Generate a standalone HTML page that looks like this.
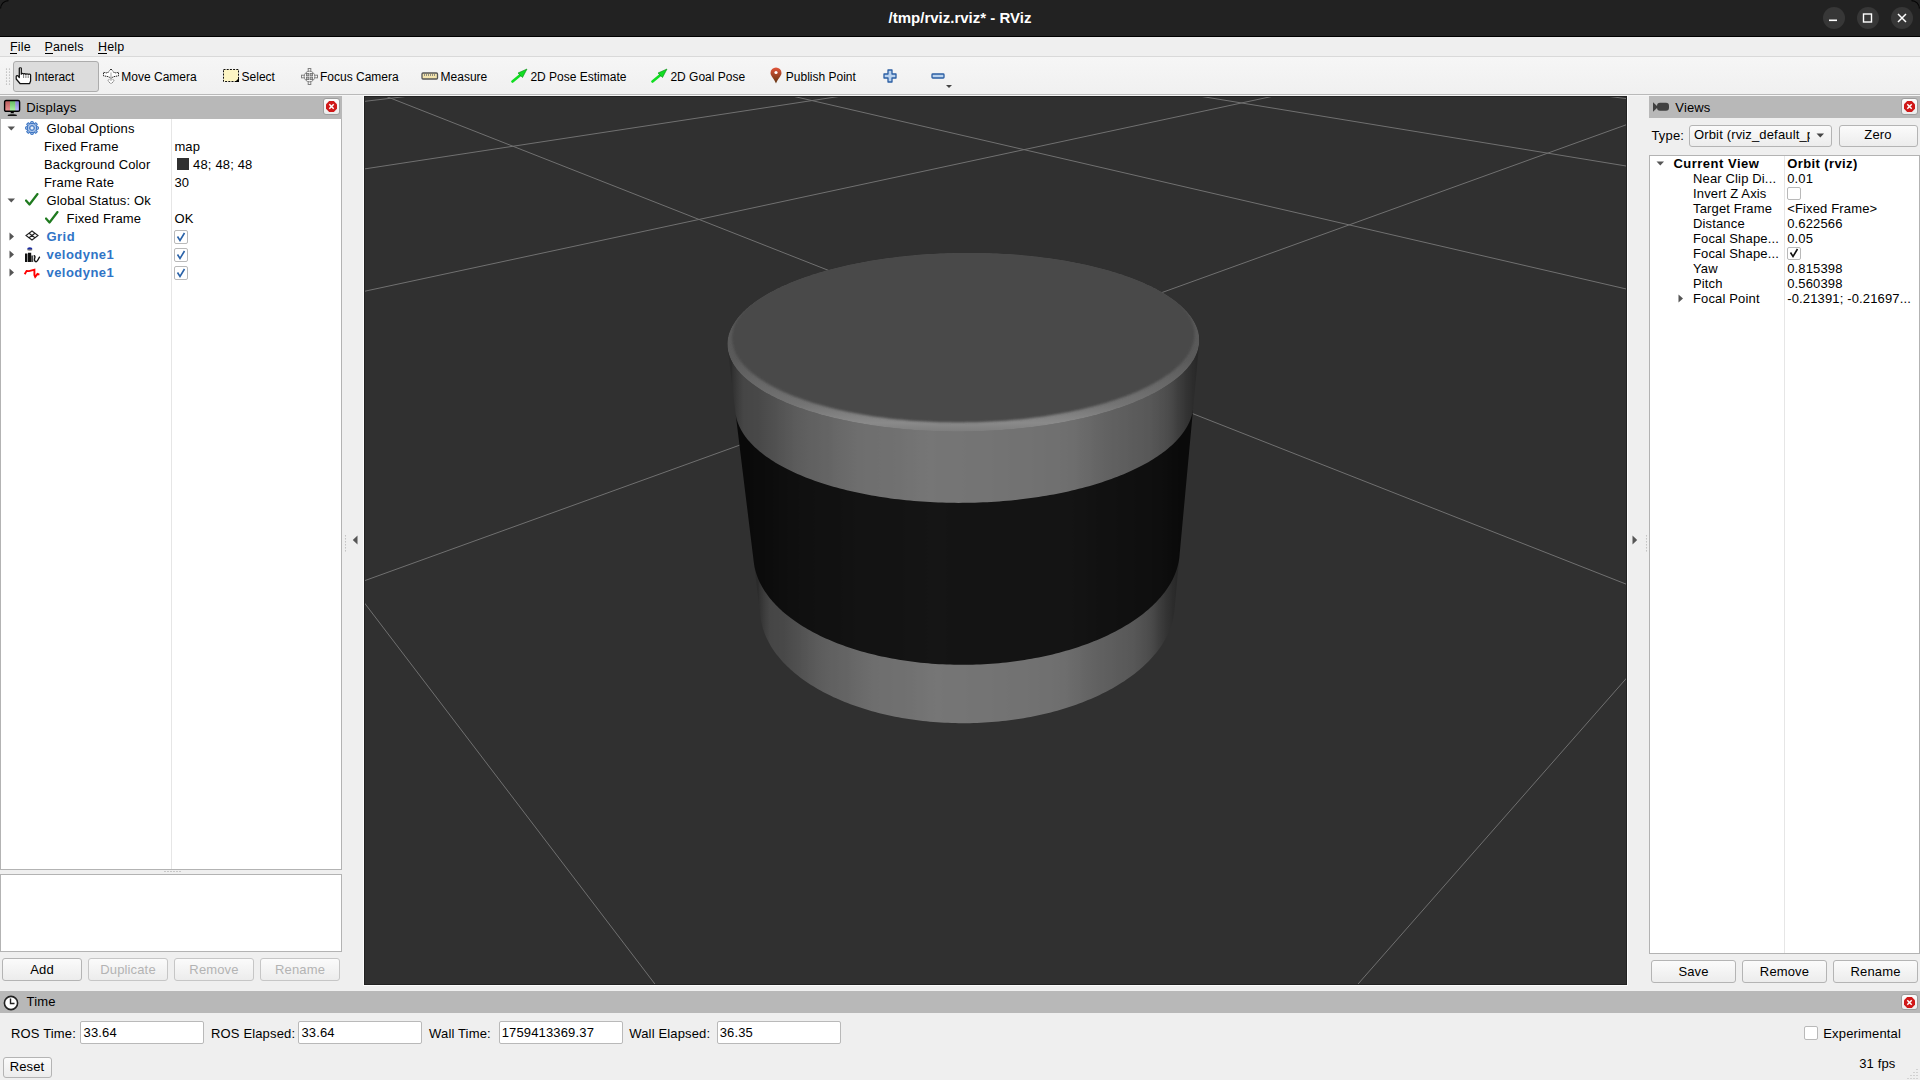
<!DOCTYPE html>
<html><head><meta charset="utf-8"><title>RViz</title>
<style>
html,body{margin:0;padding:0;width:1920px;height:1080px;overflow:hidden;background:#efefef;}
body{position:relative;font-family:"Liberation Sans", sans-serif;}
.t{position:absolute;white-space:nowrap;line-height:14px;font-family:"Liberation Sans", sans-serif;}
.btn{position:absolute;box-sizing:border-box;border:1px solid #b4b4b4;border-radius:3px;background:linear-gradient(#fbfbfb,#ececec);}
.inp{position:absolute;box-sizing:border-box;border:1px solid #b9b9b9;border-radius:2px;background:#fff;}
.cb{position:absolute;box-sizing:border-box;border:1px solid #b9b9b9;border-radius:2px;background:#fff;}
.dt{position:absolute;background:#b8b8b8;}
.close{position:absolute;box-sizing:border-box;width:17px;height:17px;border:1px solid #9e9e9e;border-radius:3px;background:linear-gradient(#fdfdfd,#ececec);}
</style></head><body>

<div style="position:absolute;left:0px;top:0px;width:1920px;height:36px;background:#222222;"></div>
<div style="position:absolute;left:0px;top:36px;width:1920px;height:1px;background:#000;"></div>
<svg style="position:absolute;left:0px;top:0px;" width="12" height="12" viewBox="0 0 12 12"><path d="M0.6 8.5 A8 8 0 0 1 8.5 0.6" fill="none" stroke="#050505" stroke-width="1.1"/></svg>
<svg style="position:absolute;left:1908px;top:0px;" width="12" height="12" viewBox="0 0 12 12"><path d="M3.5 0.6 A8 8 0 0 1 11.4 8.5" fill="none" stroke="#050505" stroke-width="1.1"/></svg>
<div class="t" style="left:0;width:1920px;text-align:center;top:9px;line-height:18px;font-size:15px;font-weight:bold;color:#ffffff;letter-spacing:0px;padding-left:0px">/tmp/rviz.rviz* - RViz</div>
<div style="position:absolute;left:1823px;top:7px;width:22px;height:22px;background:#373737;border-radius:50%;"></div>
<div style="position:absolute;left:1857px;top:7px;width:22px;height:22px;background:#373737;border-radius:50%;"></div>
<div style="position:absolute;left:1891px;top:7px;width:22px;height:22px;background:#373737;border-radius:50%;"></div>
<svg style="position:absolute;left:1823px;top:7px;" width="90" height="22" viewBox="0 0 90 22">
<rect x="6" y="12.5" width="8" height="1.6" fill="#fff"/>
<rect x="40.5" y="7" width="8" height="8" fill="none" stroke="#fff" stroke-width="1.4"/>
<path d="M75 7 L83 15 M83 7 L75 15" stroke="#fff" stroke-width="1.5"/>
</svg>
<div style="position:absolute;left:0px;top:37px;width:1920px;height:20px;background:#efefef;"></div>
<div style="position:absolute;left:0px;top:56px;width:1920px;height:1px;background:#d9d9d9;"></div>
<div class="t" style="left:10px;top:39.97px;font-size:12.5px;color:#000;font-weight:normal;letter-spacing:0.15px;">File</div>
<div style="position:absolute;left:10px;top:53px;width:7px;height:1px;background:#000;"></div>
<div class="t" style="left:44.5px;top:39.97px;font-size:12.5px;color:#000;font-weight:normal;letter-spacing:0.15px;">Panels</div>
<div style="position:absolute;left:44.5px;top:53px;width:8px;height:1px;background:#000;"></div>
<div class="t" style="left:98px;top:39.97px;font-size:12.5px;color:#000;font-weight:normal;letter-spacing:0.15px;">Help</div>
<div style="position:absolute;left:98px;top:53px;width:9px;height:1px;background:#000;"></div>
<div style="position:absolute;left:0px;top:57px;width:1920px;height:37px;background:linear-gradient(#f6f6f6,#f0f0f0);"></div>
<div style="position:absolute;left:0px;top:94px;width:1920px;height:1px;background:#b9b9b9;"></div>
<div style="position:absolute;left:0px;top:95px;width:1920px;height:1px;background:#f6f6f6;"></div>
<svg style="position:absolute;left:5px;top:67px;" width="6" height="18" viewBox="0 0 6 18"><circle cx="1.5" cy="2" r="0.6" fill="#9a9a9a"/><circle cx="1.5" cy="5" r="0.6" fill="#9a9a9a"/><circle cx="1.5" cy="8" r="0.6" fill="#9a9a9a"/><circle cx="1.5" cy="11" r="0.6" fill="#9a9a9a"/><circle cx="1.5" cy="14" r="0.6" fill="#9a9a9a"/><circle cx="1.5" cy="17" r="0.6" fill="#9a9a9a"/><circle cx="4.5" cy="2" r="0.6" fill="#9a9a9a"/><circle cx="4.5" cy="5" r="0.6" fill="#9a9a9a"/><circle cx="4.5" cy="8" r="0.6" fill="#9a9a9a"/><circle cx="4.5" cy="11" r="0.6" fill="#9a9a9a"/><circle cx="4.5" cy="14" r="0.6" fill="#9a9a9a"/><circle cx="4.5" cy="17" r="0.6" fill="#9a9a9a"/></svg>
<div style="position:absolute;left:13px;top:61px;width:86px;height:31px;box-sizing:border-box;background:#dcdcdc;border:1px solid #acacac;border-radius:3px;"></div>
<svg style="position:absolute;left:15px;top:67px;" width="18" height="18" viewBox="0 0 18 18"><path d="M4.3 1.2 C4.3 0.6 6.3 0.6 6.3 1.2 V7.2 C6.3 6 8.6 6 8.6 7.2 C8.6 6.3 10.9 6.3 10.9 7.4 C10.9 6.6 13.2 6.6 13.2 7.6 C13.2 7 15.6 7 15.6 8 V14 L14.6 16.5 H5 L1.2 12 V9.5 C1.2 8.6 2.6 8.4 3.2 9.2 L4.3 10.5 Z" fill="#fff" stroke="#111" stroke-width="1.25" stroke-linejoin="round"/>
<path d="M8.6 8 V11 M10.9 8.2 V11 M13.2 8.4 V11" stroke="#555" stroke-width="0.8"/></svg>
<div class="t" style="left:34.4px;top:69.54px;font-size:12px;color:#000;font-weight:normal;letter-spacing:0px;">Interact</div>
<svg style="position:absolute;left:102px;top:67px;" width="18" height="18" viewBox="0 0 18 18"><g fill="#fff" stroke="#222" stroke-width="1" stroke-dasharray="1.3 0.7">
<path d="M9 2 L12.5 6 L16.5 5.4 V8.8 L12 9.6 L9 11 L6 9.6 L1.5 8.8 V5.4 L5.5 6 Z"/></g>
<path d="M9 11.5 L12.3 13.5 L9 17 L5.7 13.5 Z" fill="#fff" stroke="#777" stroke-width="1" stroke-dasharray="1.3 0.7"/>
<path d="M9 5.5 V14" stroke="#bbb" stroke-width="1.3"/></svg>
<div class="t" style="left:121.3px;top:69.54px;font-size:12px;color:#000;font-weight:normal;letter-spacing:0px;">Move Camera</div>
<svg style="position:absolute;left:223px;top:69px;" width="16" height="13" viewBox="0 0 16 13"><rect x="0.5" y="0.5" width="15" height="12" fill="#fdf5c4" stroke="#111" stroke-width="1" stroke-dasharray="2 1.2"/>
<path d="M16 9 V13 H12 Z" fill="#000"/></svg>
<div class="t" style="left:241.6px;top:69.54px;font-size:12px;color:#000;font-weight:normal;letter-spacing:0px;">Select</div>
<svg style="position:absolute;left:300px;top:67px;" width="19" height="19" viewBox="0 0 19 19"><g fill="#f6f6f6" stroke="#808080" stroke-width="1">
<rect x="8.2" y="1.5" width="2.6" height="16"/><rect x="1.5" y="8.2" width="16" height="2.6"/>
<circle cx="9.5" cy="9.5" r="5.3"/></g>
<g fill="#bdbdbd" stroke="#6e6e6e" stroke-width="0.8"><rect x="6.4" y="6.4" width="2.4" height="2.4"/><rect x="10.2" y="6.4" width="2.4" height="2.4"/><rect x="6.4" y="10.2" width="2.4" height="2.4"/><rect x="10.2" y="10.2" width="2.4" height="2.4"/></g></svg>
<div class="t" style="left:320px;top:69.54px;font-size:12px;color:#000;font-weight:normal;letter-spacing:0px;">Focus Camera</div>
<svg style="position:absolute;left:421px;top:72px;" width="18" height="8" viewBox="0 0 18 8"><rect x="1" y="1" width="15.5" height="6" rx="1" fill="#f3e4ad" stroke="#555" stroke-width="1.3"/>
<path d="M3.5 2 v2 M5.5 2 v2 M7.5 2 v2 M9.5 2 v2 M11.5 2 v2 M13.5 2 v2" stroke="#777" stroke-width="0.8"/></svg>
<div class="t" style="left:440.6px;top:69.54px;font-size:12px;color:#000;font-weight:normal;letter-spacing:0px;">Measure</div>
<svg style="position:absolute;left:511px;top:68px;" width="17" height="15" viewBox="0 0 17 15"><path d="M1.5 13.5 L10 6.5" stroke="#11dd22" stroke-width="2.6" stroke-linecap="round"/>
<path d="M16 1 L7 5 L11.5 9.5 Z" fill="#11dd22" stroke="#0a8a14" stroke-width="0.6"/></svg>
<div class="t" style="left:530.4px;top:69.54px;font-size:12px;color:#000;font-weight:normal;letter-spacing:0px;">2D Pose Estimate</div>
<svg style="position:absolute;left:651px;top:68px;" width="17" height="15" viewBox="0 0 17 15"><path d="M1.5 13.5 L10 6.5" stroke="#11dd22" stroke-width="2.6" stroke-linecap="round"/>
<path d="M16 1 L7 5 L11.5 9.5 Z" fill="#11dd22" stroke="#0a8a14" stroke-width="0.6"/></svg>
<div class="t" style="left:670.4px;top:69.54px;font-size:12px;color:#000;font-weight:normal;letter-spacing:0px;">2D Goal Pose</div>
<svg style="position:absolute;left:769px;top:67px;" width="14" height="17" viewBox="0 0 14 17"><defs><linearGradient id="pg" x1="0" y1="0" x2="0" y2="1"><stop offset="0" stop-color="#e3553a"/><stop offset="1" stop-color="#5e3410"/></linearGradient></defs>
<path d="M7 16.5 C5.5 12 1.5 9 1.5 6 A5.5 5.5 0 0 1 12.5 6 C12.5 9 8.5 12 7 16.5 Z" fill="url(#pg)"/>
<circle cx="7" cy="5.5" r="1.6" fill="#fff"/></svg>
<div class="t" style="left:785.8px;top:69.54px;font-size:12px;color:#000;font-weight:normal;letter-spacing:0px;">Publish Point</div>
<svg style="position:absolute;left:883px;top:69px;" width="14" height="14" viewBox="0 0 14 14"><path d="M5 1 H9 V5 H13 V9 H9 V13 H5 V9 H1 V5 H5 Z" fill="#b9d2ee" stroke="#2a5da3" stroke-width="1.3" stroke-linejoin="round"/></svg>
<svg style="position:absolute;left:931px;top:73px;" width="14" height="6" viewBox="0 0 14 6"><rect x="1" y="1" width="12" height="4" rx="0.8" fill="#b9d2ee" stroke="#2a5da3" stroke-width="1.3"/></svg>
<svg style="position:absolute;left:945px;top:84px;" width="8" height="5" viewBox="0 0 8 5"><path d="M1 1 H7 L4 4 Z" fill="#444"/></svg>
<div style="position:absolute;left:0px;top:96px;width:342px;height:23px;background:#b8b8b8;"></div>
<svg style="position:absolute;left:3px;top:99px;" width="19" height="19" viewBox="0 0 19 19"><defs>
<linearGradient id="mr" x1="0" y1="0" x2="0" y2="1"><stop offset="0" stop-color="#b85c5c"/><stop offset="1" stop-color="#ee9494"/></linearGradient>
<linearGradient id="mgr" x1="0" y1="0" x2="0" y2="1"><stop offset="0" stop-color="#62b862"/><stop offset="1" stop-color="#b0f6a6"/></linearGradient>
<linearGradient id="mb" x1="0" y1="0" x2="0" y2="1"><stop offset="0" stop-color="#8480d0"/><stop offset="1" stop-color="#bcbcff"/></linearGradient></defs>
<rect x="1.8" y="1.6" width="5.2" height="10.4" fill="url(#mr)"/><rect x="7" y="1.6" width="5.4" height="10.4" fill="url(#mgr)"/><rect x="12.4" y="1.6" width="4" height="10.4" fill="url(#mb)"/>
<rect x="1.6" y="1.5" width="15" height="10.8" rx="1.4" fill="none" stroke="#000" stroke-width="1.4"/>
<path d="M8 12.5 H10.5 L11 14.3 H7.5 Z" fill="#000"/>
<path d="M4.6 16.2 C5 15 13.6 15 14 16.2 L13.6 17 H5 Z" fill="#111"/></svg>
<div class="t" style="left:26.3px;top:101.00px;font-size:13px;color:#000;font-weight:normal;letter-spacing:0.15px;">Displays</div>
<div class="close" style="left:323px;top:98px;"></div>
<svg style="position:absolute;left:325px;top:100px;" width="13" height="13" viewBox="0 0 13 13"><path d="M4.2 1 H8.8 L12 4.2 V8.8 L8.8 12 H4.2 L1 8.8 V4.2 Z" fill="#d01818"/>
<path d="M4.3 4.3 L8.7 8.7 M8.7 4.3 L4.3 8.7" stroke="#fff" stroke-width="1.5"/></svg>
<div style="position:absolute;left:0px;top:119px;width:342px;height:751px;box-sizing:border-box;background:#fff;border:1px solid #b3b3b3;border-top:none;"></div>
<div style="position:absolute;left:171px;top:119px;width:1px;height:750px;background:#e6e6e6;"></div>
<svg style="position:absolute;left:7px;top:126px;" width="9" height="5" viewBox="0 0 9 5"><path d="M0.5 0.5 H8 L4.25 4.5 Z" fill="#555"/></svg>
<svg style="position:absolute;left:24.5px;top:120.5px;" width="14" height="14" viewBox="0 0 14 14"><g transform="translate(7 7)" fill="#a9c3e8" stroke="#3b74c2" stroke-width="1"><rect x="-1.3" y="-6.4" width="2.6" height="3" rx="0.4" transform="rotate(0)"/><rect x="-1.3" y="-6.4" width="2.6" height="3" rx="0.4" transform="rotate(45)"/><rect x="-1.3" y="-6.4" width="2.6" height="3" rx="0.4" transform="rotate(90)"/><rect x="-1.3" y="-6.4" width="2.6" height="3" rx="0.4" transform="rotate(135)"/><rect x="-1.3" y="-6.4" width="2.6" height="3" rx="0.4" transform="rotate(180)"/><rect x="-1.3" y="-6.4" width="2.6" height="3" rx="0.4" transform="rotate(225)"/><rect x="-1.3" y="-6.4" width="2.6" height="3" rx="0.4" transform="rotate(270)"/><rect x="-1.3" y="-6.4" width="2.6" height="3" rx="0.4" transform="rotate(315)"/><circle r="4.6"/></g>
<g transform="translate(7 7)"><circle r="4.1" fill="#a9c3e8"/><circle r="2.4" fill="none" stroke="#3b74c2" stroke-width="1"/><circle r="1" fill="#fff"/></g></svg>
<div class="t" style="left:46.5px;top:122.00px;font-size:13px;color:#000;font-weight:normal;letter-spacing:0.15px;">Global Options</div>
<div class="t" style="left:44px;top:140.00px;font-size:13px;color:#000;font-weight:normal;letter-spacing:0.15px;">Fixed Frame</div>
<div class="t" style="left:174.4px;top:140.00px;font-size:13px;color:#000;font-weight:normal;letter-spacing:0.15px;">map</div>
<div class="t" style="left:44px;top:158.00px;font-size:13px;color:#000;font-weight:normal;letter-spacing:0.15px;">Background Color</div>
<div style="position:absolute;left:177px;top:158px;width:12px;height:12px;background:#303030;border:0px;"></div>
<div class="t" style="left:193.1px;top:158.00px;font-size:13px;color:#000;font-weight:normal;letter-spacing:0.15px;">48; 48; 48</div>
<div class="t" style="left:44px;top:176.00px;font-size:13px;color:#000;font-weight:normal;letter-spacing:0.15px;">Frame Rate</div>
<div class="t" style="left:174.4px;top:176.00px;font-size:13px;color:#000;font-weight:normal;letter-spacing:0.15px;">30</div>
<svg style="position:absolute;left:7px;top:198px;" width="9" height="5" viewBox="0 0 9 5"><path d="M0.5 0.5 H8 L4.25 4.5 Z" fill="#555"/></svg>
<svg style="position:absolute;left:25px;top:193px;" width="14" height="13" viewBox="0 0 14 13"><path d="M1 7.5 L4.5 11.5 L12.5 1" fill="none" stroke="#1f7a1f" stroke-width="2.2" stroke-linecap="round" stroke-linejoin="round"/></svg>
<div class="t" style="left:46.5px;top:194.00px;font-size:13px;color:#000;font-weight:normal;letter-spacing:0.15px;">Global Status: Ok</div>
<svg style="position:absolute;left:45px;top:211px;" width="14" height="13" viewBox="0 0 14 13"><path d="M1 7.5 L4.5 11.5 L12.5 1" fill="none" stroke="#1f7a1f" stroke-width="2.2" stroke-linecap="round" stroke-linejoin="round"/></svg>
<div class="t" style="left:66.6px;top:212.00px;font-size:13px;color:#000;font-weight:normal;letter-spacing:0.15px;">Fixed Frame</div>
<div class="t" style="left:174.4px;top:212.00px;font-size:13px;color:#000;font-weight:normal;letter-spacing:0.15px;">OK</div>
<svg style="position:absolute;left:8.5px;top:232.0px;" width="6" height="9" viewBox="0 0 6 9"><path d="M0.5 0.5 V8.5 L5 4.5 Z" fill="#555"/></svg>
<div class="t" style="left:46.5px;top:230.00px;font-size:13px;color:#2f74c6;font-weight:bold;letter-spacing:0.45px;">Grid</div>
<div class="cb" style="left:174px;top:229.5px;width:14px;height:14px;"></div>
<svg style="position:absolute;left:175px;top:230.5px;" width="12" height="12" viewBox="0 0 12 12"><path d="M2.5 5.5 L5 9.5 L9.5 2" fill="none" stroke="#2a62a8" stroke-width="1.6"/></svg>
<svg style="position:absolute;left:8.5px;top:250.0px;" width="6" height="9" viewBox="0 0 6 9"><path d="M0.5 0.5 V8.5 L5 4.5 Z" fill="#555"/></svg>
<div class="t" style="left:46.5px;top:248.00px;font-size:13px;color:#2f74c6;font-weight:bold;letter-spacing:0.45px;">velodyne1</div>
<div class="cb" style="left:174px;top:247.5px;width:14px;height:14px;"></div>
<svg style="position:absolute;left:175px;top:248.5px;" width="12" height="12" viewBox="0 0 12 12"><path d="M2.5 5.5 L5 9.5 L9.5 2" fill="none" stroke="#2a62a8" stroke-width="1.6"/></svg>
<svg style="position:absolute;left:8.5px;top:268.0px;" width="6" height="9" viewBox="0 0 6 9"><path d="M0.5 0.5 V8.5 L5 4.5 Z" fill="#555"/></svg>
<div class="t" style="left:46.5px;top:266.00px;font-size:13px;color:#2f74c6;font-weight:bold;letter-spacing:0.45px;">velodyne1</div>
<div class="cb" style="left:174px;top:265.5px;width:14px;height:14px;"></div>
<svg style="position:absolute;left:175px;top:266.5px;" width="12" height="12" viewBox="0 0 12 12"><path d="M2.5 5.5 L5 9.5 L9.5 2" fill="none" stroke="#2a62a8" stroke-width="1.6"/></svg>
<svg style="position:absolute;left:25px;top:230px;" width="14" height="11" viewBox="0 0 14 11"><path d="M7 1 L13 5.5 L7 10 L1 5.5 Z M4 3.2 L10 7.8 M10 3.2 L4 7.8" fill="none" stroke="#222" stroke-width="1.1"/></svg>
<svg style="position:absolute;left:24px;top:246px;" width="17" height="17" viewBox="0 0 17 17"><ellipse cx="5.8" cy="2.9" rx="2.6" ry="1.7" fill="#1a2aa0"/><rect x="3.4" y="3.6" width="4.8" height="0.8" fill="#c8b870"/>
<path d="M1 7.5 h2.4 v8.5 h-2.4 z M4 6.8 h3.2 v9.2 h-3.2 z" fill="#111"/><path d="M3.4 8 h0.6 v8 h-0.6z" fill="#888"/>
<path d="M7.2 9.5 h2 v6.5 h-2 z" fill="#444"/>
<path d="M9.8 9.8 C11 9.5 11.2 11 10.6 12.5 C10 14.5 11 16 12.5 15.6 C14 15.2 14.5 12 15.8 10.8" fill="none" stroke="#111" stroke-width="1.4"/></svg>
<svg style="position:absolute;left:23px;top:268px;" width="18" height="11" viewBox="0 0 18 11"><path d="M1.7 6.2 L3.6 2.9 L6 3.1 L9.8 2.1 L11.4 1.7 L11.4 7 L12.2 8.9 L14.5 5.9 L16.4 6.6" fill="none" stroke="#ff0000" stroke-width="1.9" stroke-linejoin="miter"/></svg>
<svg style="position:absolute;left:164px;top:870px;" width="17" height="3" viewBox="0 0 17 3"><circle cx="1" cy="1.5" r="0.6" fill="#999"/><circle cx="4" cy="1.5" r="0.6" fill="#999"/><circle cx="7" cy="1.5" r="0.6" fill="#999"/><circle cx="10" cy="1.5" r="0.6" fill="#999"/><circle cx="13" cy="1.5" r="0.6" fill="#999"/><circle cx="16" cy="1.5" r="0.6" fill="#999"/></svg>
<div style="position:absolute;left:0px;top:874px;width:342px;height:78px;box-sizing:border-box;background:#fff;border:1px solid #b3b3b3;"></div>
<div class="btn" style="left:2px;top:958px;width:80px;height:23px;"></div>
<div class="t" style="left:2.0px;width:80px;text-align:center;top:962.50px;font-size:13px;color:#000;font-weight:normal;letter-spacing:0.15px">Add</div>
<div class="btn" style="left:88px;top:958px;width:80px;height:23px;border-color:#c6c6c6;"></div>
<div class="t" style="left:88.0px;width:80px;text-align:center;top:962.50px;font-size:13px;color:#b3b3b3;font-weight:normal;letter-spacing:0.15px">Duplicate</div>
<div class="btn" style="left:174px;top:958px;width:80px;height:23px;border-color:#c6c6c6;"></div>
<div class="t" style="left:174.0px;width:80px;text-align:center;top:962.50px;font-size:13px;color:#b3b3b3;font-weight:normal;letter-spacing:0.15px">Remove</div>
<div class="btn" style="left:260px;top:958px;width:80px;height:23px;border-color:#c6c6c6;"></div>
<div class="t" style="left:260.0px;width:80px;text-align:center;top:962.50px;font-size:13px;color:#b3b3b3;font-weight:normal;letter-spacing:0.15px">Rename</div>
<svg style="position:absolute;left:352px;top:535px;" width="6" height="10" viewBox="0 0 6 10"><path d="M5.5 0.5 V9.5 L0.8 5 Z" fill="#555"/></svg>
<svg style="position:absolute;left:344px;top:535px;" width="3" height="17" viewBox="0 0 3 17"><circle cx="1.5" cy="0.8" r="0.6" fill="#aaa"/><circle cx="1.5" cy="3.8" r="0.6" fill="#aaa"/><circle cx="1.5" cy="6.8" r="0.6" fill="#aaa"/><circle cx="1.5" cy="9.8" r="0.6" fill="#aaa"/><circle cx="1.5" cy="12.8" r="0.6" fill="#aaa"/><circle cx="1.5" cy="15.8" r="0.6" fill="#aaa"/></svg>
<div style="position:absolute;left:363px;top:95px;width:1px;height:891px;background:#fcfcfc;"></div>
<div style="position:absolute;left:364px;top:96px;width:1263px;height:888px;background:#303030;overflow:hidden;">
<svg width="1263" height="889" viewBox="0 0 1263 889" style="position:absolute;left:0;top:0"><g stroke="#707070" stroke-width="1" fill="none"><line x1="45.83" y1="0.00" x2="-0.00" y2="5.43"/><line x1="477.97" y1="0.00" x2="0.00" y2="73.00"/><line x1="909.98" y1="0.00" x2="0.00" y2="195.39"/><line x1="1263.00" y1="28.49" x2="0.00" y2="484.90"/><line x1="1263.00" y1="581.63" x2="993.17" y2="889.00"/><line x1="1241.82" y1="0.00" x2="1263.00" y2="2.69"/><line x1="835.06" y1="0.00" x2="1263.00" y2="70.15"/><line x1="428.18" y1="0.00" x2="1263.00" y2="193.17"/><line x1="21.18" y1="0.00" x2="1263.00" y2="488.48"/><line x1="0.00" y1="506.35" x2="291.65" y2="889.00"/></g>
<defs>
<linearGradient id="sideg" gradientUnits="userSpaceOnUse" x1="367.51" y1="0" x2="832.27" y2="0"><stop offset="0.0000" stop-color="rgb(43,43,43)"/><stop offset="0.0004" stop-color="rgb(44,44,44)"/><stop offset="0.0010" stop-color="rgb(46,46,46)"/><stop offset="0.0017" stop-color="rgb(47,47,47)"/><stop offset="0.0025" stop-color="rgb(49,49,49)"/><stop offset="0.0034" stop-color="rgb(50,50,50)"/><stop offset="0.0045" stop-color="rgb(51,51,51)"/><stop offset="0.0057" stop-color="rgb(53,53,53)"/><stop offset="0.0070" stop-color="rgb(54,54,54)"/><stop offset="0.0085" stop-color="rgb(55,55,55)"/><stop offset="0.0100" stop-color="rgb(57,57,57)"/><stop offset="0.0117" stop-color="rgb(59,59,59)"/><stop offset="0.0136" stop-color="rgb(60,60,60)"/><stop offset="0.0155" stop-color="rgb(62,62,62)"/><stop offset="0.0176" stop-color="rgb(64,64,64)"/><stop offset="0.0198" stop-color="rgb(65,65,65)"/><stop offset="0.0222" stop-color="rgb(67,67,67)"/><stop offset="0.0247" stop-color="rgb(69,69,69)"/><stop offset="0.0273" stop-color="rgb(70,70,70)"/><stop offset="0.0300" stop-color="rgb(70,70,70)"/><stop offset="0.0329" stop-color="rgb(70,70,70)"/><stop offset="0.0359" stop-color="rgb(71,71,71)"/><stop offset="0.0390" stop-color="rgb(71,71,71)"/><stop offset="0.0423" stop-color="rgb(71,71,71)"/><stop offset="0.0457" stop-color="rgb(71,71,71)"/><stop offset="0.0492" stop-color="rgb(72,72,72)"/><stop offset="0.0529" stop-color="rgb(72,72,72)"/><stop offset="0.0567" stop-color="rgb(72,72,72)"/><stop offset="0.0606" stop-color="rgb(73,73,73)"/><stop offset="0.0646" stop-color="rgb(74,74,74)"/><stop offset="0.0688" stop-color="rgb(75,75,75)"/><stop offset="0.0731" stop-color="rgb(76,76,76)"/><stop offset="0.0776" stop-color="rgb(77,77,77)"/><stop offset="0.0821" stop-color="rgb(78,78,78)"/><stop offset="0.0868" stop-color="rgb(79,79,79)"/><stop offset="0.0917" stop-color="rgb(80,80,80)"/><stop offset="0.0966" stop-color="rgb(81,81,81)"/><stop offset="0.1017" stop-color="rgb(83,83,83)"/><stop offset="0.1069" stop-color="rgb(84,84,84)"/><stop offset="0.1122" stop-color="rgb(85,85,85)"/><stop offset="0.1176" stop-color="rgb(87,87,87)"/><stop offset="0.1232" stop-color="rgb(88,88,88)"/><stop offset="0.1289" stop-color="rgb(89,89,89)"/><stop offset="0.1347" stop-color="rgb(91,91,91)"/><stop offset="0.1406" stop-color="rgb(92,92,92)"/><stop offset="0.1466" stop-color="rgb(93,93,93)"/><stop offset="0.1528" stop-color="rgb(94,94,94)"/><stop offset="0.1590" stop-color="rgb(95,95,95)"/><stop offset="0.1654" stop-color="rgb(96,96,96)"/><stop offset="0.1719" stop-color="rgb(97,97,97)"/><stop offset="0.1785" stop-color="rgb(97,97,97)"/><stop offset="0.1852" stop-color="rgb(98,98,98)"/><stop offset="0.1920" stop-color="rgb(99,99,99)"/><stop offset="0.1989" stop-color="rgb(100,100,100)"/><stop offset="0.2059" stop-color="rgb(100,100,100)"/><stop offset="0.2130" stop-color="rgb(101,101,101)"/><stop offset="0.2202" stop-color="rgb(103,103,103)"/><stop offset="0.2275" stop-color="rgb(104,104,104)"/><stop offset="0.2349" stop-color="rgb(105,105,105)"/><stop offset="0.2424" stop-color="rgb(106,106,106)"/><stop offset="0.2499" stop-color="rgb(107,107,107)"/><stop offset="0.2576" stop-color="rgb(108,108,108)"/><stop offset="0.2653" stop-color="rgb(109,109,109)"/><stop offset="0.2732" stop-color="rgb(110,110,110)"/><stop offset="0.2811" stop-color="rgb(110,110,110)"/><stop offset="0.2890" stop-color="rgb(111,111,111)"/><stop offset="0.2971" stop-color="rgb(111,111,111)"/><stop offset="0.3052" stop-color="rgb(111,111,111)"/><stop offset="0.3134" stop-color="rgb(111,111,111)"/><stop offset="0.3216" stop-color="rgb(112,112,112)"/><stop offset="0.3300" stop-color="rgb(112,112,112)"/><stop offset="0.3383" stop-color="rgb(112,112,112)"/><stop offset="0.3468" stop-color="rgb(112,112,112)"/><stop offset="0.3553" stop-color="rgb(113,113,113)"/><stop offset="0.3638" stop-color="rgb(113,113,113)"/><stop offset="0.3724" stop-color="rgb(114,114,114)"/><stop offset="0.3810" stop-color="rgb(115,115,115)"/><stop offset="0.3897" stop-color="rgb(115,115,115)"/><stop offset="0.3984" stop-color="rgb(116,116,116)"/><stop offset="0.4072" stop-color="rgb(117,117,117)"/><stop offset="0.4159" stop-color="rgb(117,117,117)"/><stop offset="0.4248" stop-color="rgb(118,118,118)"/><stop offset="0.4336" stop-color="rgb(118,118,118)"/><stop offset="0.4425" stop-color="rgb(117,117,117)"/><stop offset="0.4514" stop-color="rgb(117,117,117)"/><stop offset="0.4603" stop-color="rgb(117,117,117)"/><stop offset="0.4692" stop-color="rgb(117,117,117)"/><stop offset="0.4781" stop-color="rgb(117,117,117)"/><stop offset="0.4870" stop-color="rgb(117,117,117)"/><stop offset="0.4960" stop-color="rgb(117,117,117)"/><stop offset="0.5049" stop-color="rgb(116,116,116)"/><stop offset="0.5138" stop-color="rgb(116,116,116)"/><stop offset="0.5228" stop-color="rgb(116,116,116)"/><stop offset="0.5317" stop-color="rgb(116,116,116)"/><stop offset="0.5406" stop-color="rgb(116,116,116)"/><stop offset="0.5495" stop-color="rgb(116,116,116)"/><stop offset="0.5584" stop-color="rgb(116,116,116)"/><stop offset="0.5672" stop-color="rgb(115,115,115)"/><stop offset="0.5761" stop-color="rgb(115,115,115)"/><stop offset="0.5849" stop-color="rgb(115,115,115)"/><stop offset="0.5936" stop-color="rgb(115,115,115)"/><stop offset="0.6024" stop-color="rgb(114,114,114)"/><stop offset="0.6111" stop-color="rgb(114,114,114)"/><stop offset="0.6197" stop-color="rgb(114,114,114)"/><stop offset="0.6283" stop-color="rgb(114,114,114)"/><stop offset="0.6369" stop-color="rgb(114,114,114)"/><stop offset="0.6454" stop-color="rgb(114,114,114)"/><stop offset="0.6539" stop-color="rgb(113,113,113)"/><stop offset="0.6623" stop-color="rgb(113,113,113)"/><stop offset="0.6707" stop-color="rgb(113,113,113)"/><stop offset="0.6790" stop-color="rgb(112,112,112)"/><stop offset="0.6872" stop-color="rgb(112,112,112)"/><stop offset="0.6954" stop-color="rgb(112,112,112)"/><stop offset="0.7035" stop-color="rgb(112,112,112)"/><stop offset="0.7115" stop-color="rgb(111,111,111)"/><stop offset="0.7194" stop-color="rgb(111,111,111)"/><stop offset="0.7273" stop-color="rgb(110,110,110)"/><stop offset="0.7351" stop-color="rgb(110,110,110)"/><stop offset="0.7428" stop-color="rgb(109,109,109)"/><stop offset="0.7504" stop-color="rgb(107,107,107)"/><stop offset="0.7580" stop-color="rgb(106,106,106)"/><stop offset="0.7654" stop-color="rgb(105,105,105)"/><stop offset="0.7728" stop-color="rgb(104,104,104)"/><stop offset="0.7800" stop-color="rgb(102,102,102)"/><stop offset="0.7872" stop-color="rgb(101,101,101)"/><stop offset="0.7943" stop-color="rgb(100,100,100)"/><stop offset="0.8013" stop-color="rgb(99,99,99)"/><stop offset="0.8081" stop-color="rgb(98,98,98)"/><stop offset="0.8149" stop-color="rgb(97,97,97)"/><stop offset="0.8216" stop-color="rgb(96,96,96)"/><stop offset="0.8281" stop-color="rgb(96,96,96)"/><stop offset="0.8346" stop-color="rgb(95,95,95)"/><stop offset="0.8409" stop-color="rgb(94,94,94)"/><stop offset="0.8472" stop-color="rgb(94,94,94)"/><stop offset="0.8533" stop-color="rgb(93,93,93)"/><stop offset="0.8593" stop-color="rgb(92,92,92)"/><stop offset="0.8652" stop-color="rgb(91,91,91)"/><stop offset="0.8709" stop-color="rgb(91,91,91)"/><stop offset="0.8766" stop-color="rgb(90,90,90)"/><stop offset="0.8821" stop-color="rgb(90,90,90)"/><stop offset="0.8875" stop-color="rgb(89,89,89)"/><stop offset="0.8928" stop-color="rgb(88,88,88)"/><stop offset="0.8980" stop-color="rgb(88,88,88)"/><stop offset="0.9030" stop-color="rgb(87,87,87)"/><stop offset="0.9080" stop-color="rgb(85,85,85)"/><stop offset="0.9128" stop-color="rgb(84,84,84)"/><stop offset="0.9174" stop-color="rgb(83,83,83)"/><stop offset="0.9220" stop-color="rgb(81,81,81)"/><stop offset="0.9264" stop-color="rgb(80,80,80)"/><stop offset="0.9307" stop-color="rgb(79,79,79)"/><stop offset="0.9349" stop-color="rgb(77,77,77)"/><stop offset="0.9389" stop-color="rgb(76,76,76)"/><stop offset="0.9428" stop-color="rgb(74,74,74)"/><stop offset="0.9466" stop-color="rgb(72,72,72)"/><stop offset="0.9502" stop-color="rgb(70,70,70)"/><stop offset="0.9538" stop-color="rgb(67,67,67)"/><stop offset="0.9571" stop-color="rgb(65,65,65)"/><stop offset="0.9604" stop-color="rgb(62,62,62)"/><stop offset="0.9635" stop-color="rgb(61,61,61)"/><stop offset="0.9665" stop-color="rgb(59,59,59)"/><stop offset="0.9694" stop-color="rgb(57,57,57)"/><stop offset="0.9722" stop-color="rgb(56,56,56)"/><stop offset="0.9748" stop-color="rgb(54,54,54)"/><stop offset="0.9772" stop-color="rgb(52,52,52)"/><stop offset="0.9796" stop-color="rgb(51,51,51)"/><stop offset="0.9818" stop-color="rgb(50,50,50)"/><stop offset="0.9839" stop-color="rgb(49,49,49)"/><stop offset="0.9859" stop-color="rgb(48,48,48)"/><stop offset="0.9877" stop-color="rgb(47,47,47)"/><stop offset="0.9894" stop-color="rgb(46,46,46)"/><stop offset="0.9910" stop-color="rgb(45,45,45)"/><stop offset="0.9925" stop-color="rgb(44,44,44)"/><stop offset="0.9938" stop-color="rgb(44,44,44)"/><stop offset="0.9950" stop-color="rgb(43,43,43)"/><stop offset="0.9961" stop-color="rgb(43,43,43)"/><stop offset="0.9971" stop-color="rgb(42,42,42)"/><stop offset="0.9979" stop-color="rgb(42,42,42)"/><stop offset="0.9986" stop-color="rgb(41,41,41)"/><stop offset="0.9992" stop-color="rgb(41,41,41)"/><stop offset="0.9997" stop-color="rgb(40,40,40)"/><stop offset="1.0000" stop-color="rgb(40,40,40)"/></linearGradient>
<linearGradient id="sideg2" gradientUnits="userSpaceOnUse" x1="394.17" y1="0" x2="812.16" y2="0"><stop offset="0.0000" stop-color="rgb(43,43,43)"/><stop offset="0.0006" stop-color="rgb(44,44,44)"/><stop offset="0.0013" stop-color="rgb(46,46,46)"/><stop offset="0.0021" stop-color="rgb(47,47,47)"/><stop offset="0.0031" stop-color="rgb(49,49,49)"/><stop offset="0.0041" stop-color="rgb(50,50,50)"/><stop offset="0.0053" stop-color="rgb(51,51,51)"/><stop offset="0.0067" stop-color="rgb(53,53,53)"/><stop offset="0.0081" stop-color="rgb(54,54,54)"/><stop offset="0.0097" stop-color="rgb(55,55,55)"/><stop offset="0.0114" stop-color="rgb(57,57,57)"/><stop offset="0.0132" stop-color="rgb(59,59,59)"/><stop offset="0.0152" stop-color="rgb(60,60,60)"/><stop offset="0.0173" stop-color="rgb(62,62,62)"/><stop offset="0.0195" stop-color="rgb(64,64,64)"/><stop offset="0.0219" stop-color="rgb(65,65,65)"/><stop offset="0.0243" stop-color="rgb(67,67,67)"/><stop offset="0.0269" stop-color="rgb(69,69,69)"/><stop offset="0.0297" stop-color="rgb(70,70,70)"/><stop offset="0.0325" stop-color="rgb(70,70,70)"/><stop offset="0.0355" stop-color="rgb(70,70,70)"/><stop offset="0.0386" stop-color="rgb(71,71,71)"/><stop offset="0.0419" stop-color="rgb(71,71,71)"/><stop offset="0.0452" stop-color="rgb(71,71,71)"/><stop offset="0.0487" stop-color="rgb(71,71,71)"/><stop offset="0.0524" stop-color="rgb(72,72,72)"/><stop offset="0.0561" stop-color="rgb(72,72,72)"/><stop offset="0.0600" stop-color="rgb(72,72,72)"/><stop offset="0.0640" stop-color="rgb(73,73,73)"/><stop offset="0.0682" stop-color="rgb(74,74,74)"/><stop offset="0.0724" stop-color="rgb(75,75,75)"/><stop offset="0.0768" stop-color="rgb(76,76,76)"/><stop offset="0.0813" stop-color="rgb(77,77,77)"/><stop offset="0.0860" stop-color="rgb(78,78,78)"/><stop offset="0.0907" stop-color="rgb(79,79,79)"/><stop offset="0.0956" stop-color="rgb(80,80,80)"/><stop offset="0.1006" stop-color="rgb(81,81,81)"/><stop offset="0.1057" stop-color="rgb(83,83,83)"/><stop offset="0.1110" stop-color="rgb(84,84,84)"/><stop offset="0.1163" stop-color="rgb(85,85,85)"/><stop offset="0.1218" stop-color="rgb(87,87,87)"/><stop offset="0.1274" stop-color="rgb(88,88,88)"/><stop offset="0.1331" stop-color="rgb(89,89,89)"/><stop offset="0.1389" stop-color="rgb(91,91,91)"/><stop offset="0.1449" stop-color="rgb(92,92,92)"/><stop offset="0.1509" stop-color="rgb(93,93,93)"/><stop offset="0.1571" stop-color="rgb(94,94,94)"/><stop offset="0.1633" stop-color="rgb(95,95,95)"/><stop offset="0.1697" stop-color="rgb(96,96,96)"/><stop offset="0.1762" stop-color="rgb(97,97,97)"/><stop offset="0.1828" stop-color="rgb(97,97,97)"/><stop offset="0.1895" stop-color="rgb(98,98,98)"/><stop offset="0.1962" stop-color="rgb(99,99,99)"/><stop offset="0.2031" stop-color="rgb(100,100,100)"/><stop offset="0.2101" stop-color="rgb(100,100,100)"/><stop offset="0.2172" stop-color="rgb(101,101,101)"/><stop offset="0.2243" stop-color="rgb(103,103,103)"/><stop offset="0.2316" stop-color="rgb(104,104,104)"/><stop offset="0.2389" stop-color="rgb(105,105,105)"/><stop offset="0.2464" stop-color="rgb(106,106,106)"/><stop offset="0.2539" stop-color="rgb(107,107,107)"/><stop offset="0.2615" stop-color="rgb(108,108,108)"/><stop offset="0.2692" stop-color="rgb(109,109,109)"/><stop offset="0.2769" stop-color="rgb(110,110,110)"/><stop offset="0.2847" stop-color="rgb(110,110,110)"/><stop offset="0.2926" stop-color="rgb(111,111,111)"/><stop offset="0.3006" stop-color="rgb(111,111,111)"/><stop offset="0.3086" stop-color="rgb(111,111,111)"/><stop offset="0.3167" stop-color="rgb(111,111,111)"/><stop offset="0.3249" stop-color="rgb(112,112,112)"/><stop offset="0.3331" stop-color="rgb(112,112,112)"/><stop offset="0.3414" stop-color="rgb(112,112,112)"/><stop offset="0.3497" stop-color="rgb(112,112,112)"/><stop offset="0.3581" stop-color="rgb(113,113,113)"/><stop offset="0.3666" stop-color="rgb(113,113,113)"/><stop offset="0.3750" stop-color="rgb(114,114,114)"/><stop offset="0.3835" stop-color="rgb(115,115,115)"/><stop offset="0.3921" stop-color="rgb(115,115,115)"/><stop offset="0.4007" stop-color="rgb(116,116,116)"/><stop offset="0.4093" stop-color="rgb(117,117,117)"/><stop offset="0.4180" stop-color="rgb(117,117,117)"/><stop offset="0.4267" stop-color="rgb(118,118,118)"/><stop offset="0.4354" stop-color="rgb(118,118,118)"/><stop offset="0.4441" stop-color="rgb(117,117,117)"/><stop offset="0.4529" stop-color="rgb(117,117,117)"/><stop offset="0.4617" stop-color="rgb(117,117,117)"/><stop offset="0.4704" stop-color="rgb(117,117,117)"/><stop offset="0.4792" stop-color="rgb(117,117,117)"/><stop offset="0.4880" stop-color="rgb(117,117,117)"/><stop offset="0.4968" stop-color="rgb(117,117,117)"/><stop offset="0.5056" stop-color="rgb(116,116,116)"/><stop offset="0.5144" stop-color="rgb(116,116,116)"/><stop offset="0.5232" stop-color="rgb(116,116,116)"/><stop offset="0.5320" stop-color="rgb(116,116,116)"/><stop offset="0.5408" stop-color="rgb(116,116,116)"/><stop offset="0.5496" stop-color="rgb(116,116,116)"/><stop offset="0.5583" stop-color="rgb(116,116,116)"/><stop offset="0.5670" stop-color="rgb(115,115,115)"/><stop offset="0.5757" stop-color="rgb(115,115,115)"/><stop offset="0.5844" stop-color="rgb(115,115,115)"/><stop offset="0.5930" stop-color="rgb(115,115,115)"/><stop offset="0.6017" stop-color="rgb(114,114,114)"/><stop offset="0.6102" stop-color="rgb(114,114,114)"/><stop offset="0.6188" stop-color="rgb(114,114,114)"/><stop offset="0.6273" stop-color="rgb(114,114,114)"/><stop offset="0.6357" stop-color="rgb(114,114,114)"/><stop offset="0.6441" stop-color="rgb(114,114,114)"/><stop offset="0.6525" stop-color="rgb(113,113,113)"/><stop offset="0.6608" stop-color="rgb(113,113,113)"/><stop offset="0.6690" stop-color="rgb(113,113,113)"/><stop offset="0.6772" stop-color="rgb(112,112,112)"/><stop offset="0.6853" stop-color="rgb(112,112,112)"/><stop offset="0.6934" stop-color="rgb(112,112,112)"/><stop offset="0.7014" stop-color="rgb(112,112,112)"/><stop offset="0.7093" stop-color="rgb(111,111,111)"/><stop offset="0.7172" stop-color="rgb(111,111,111)"/><stop offset="0.7250" stop-color="rgb(110,110,110)"/><stop offset="0.7327" stop-color="rgb(110,110,110)"/><stop offset="0.7403" stop-color="rgb(109,109,109)"/><stop offset="0.7479" stop-color="rgb(107,107,107)"/><stop offset="0.7553" stop-color="rgb(106,106,106)"/><stop offset="0.7627" stop-color="rgb(105,105,105)"/><stop offset="0.7700" stop-color="rgb(104,104,104)"/><stop offset="0.7772" stop-color="rgb(102,102,102)"/><stop offset="0.7844" stop-color="rgb(101,101,101)"/><stop offset="0.7914" stop-color="rgb(100,100,100)"/><stop offset="0.7983" stop-color="rgb(99,99,99)"/><stop offset="0.8052" stop-color="rgb(98,98,98)"/><stop offset="0.8119" stop-color="rgb(97,97,97)"/><stop offset="0.8185" stop-color="rgb(96,96,96)"/><stop offset="0.8251" stop-color="rgb(96,96,96)"/><stop offset="0.8315" stop-color="rgb(95,95,95)"/><stop offset="0.8378" stop-color="rgb(94,94,94)"/><stop offset="0.8440" stop-color="rgb(94,94,94)"/><stop offset="0.8501" stop-color="rgb(93,93,93)"/><stop offset="0.8561" stop-color="rgb(92,92,92)"/><stop offset="0.8620" stop-color="rgb(91,91,91)"/><stop offset="0.8678" stop-color="rgb(91,91,91)"/><stop offset="0.8735" stop-color="rgb(90,90,90)"/><stop offset="0.8790" stop-color="rgb(90,90,90)"/><stop offset="0.8844" stop-color="rgb(89,89,89)"/><stop offset="0.8898" stop-color="rgb(88,88,88)"/><stop offset="0.8949" stop-color="rgb(88,88,88)"/><stop offset="0.9000" stop-color="rgb(87,87,87)"/><stop offset="0.9050" stop-color="rgb(85,85,85)"/><stop offset="0.9098" stop-color="rgb(84,84,84)"/><stop offset="0.9145" stop-color="rgb(83,83,83)"/><stop offset="0.9191" stop-color="rgb(81,81,81)"/><stop offset="0.9236" stop-color="rgb(80,80,80)"/><stop offset="0.9279" stop-color="rgb(79,79,79)"/><stop offset="0.9321" stop-color="rgb(77,77,77)"/><stop offset="0.9362" stop-color="rgb(76,76,76)"/><stop offset="0.9402" stop-color="rgb(74,74,74)"/><stop offset="0.9441" stop-color="rgb(72,72,72)"/><stop offset="0.9478" stop-color="rgb(70,70,70)"/><stop offset="0.9514" stop-color="rgb(67,67,67)"/><stop offset="0.9548" stop-color="rgb(65,65,65)"/><stop offset="0.9582" stop-color="rgb(62,62,62)"/><stop offset="0.9614" stop-color="rgb(61,61,61)"/><stop offset="0.9645" stop-color="rgb(59,59,59)"/><stop offset="0.9674" stop-color="rgb(57,57,57)"/><stop offset="0.9702" stop-color="rgb(56,56,56)"/><stop offset="0.9729" stop-color="rgb(54,54,54)"/><stop offset="0.9755" stop-color="rgb(52,52,52)"/><stop offset="0.9780" stop-color="rgb(51,51,51)"/><stop offset="0.9803" stop-color="rgb(50,50,50)"/><stop offset="0.9825" stop-color="rgb(49,49,49)"/><stop offset="0.9845" stop-color="rgb(48,48,48)"/><stop offset="0.9865" stop-color="rgb(47,47,47)"/><stop offset="0.9883" stop-color="rgb(46,46,46)"/><stop offset="0.9900" stop-color="rgb(45,45,45)"/><stop offset="0.9915" stop-color="rgb(44,44,44)"/><stop offset="0.9930" stop-color="rgb(44,44,44)"/><stop offset="0.9943" stop-color="rgb(43,43,43)"/><stop offset="0.9955" stop-color="rgb(43,43,43)"/><stop offset="0.9965" stop-color="rgb(42,42,42)"/><stop offset="0.9975" stop-color="rgb(42,42,42)"/><stop offset="0.9983" stop-color="rgb(41,41,41)"/><stop offset="0.9990" stop-color="rgb(41,41,41)"/><stop offset="0.9995" stop-color="rgb(40,40,40)"/><stop offset="1.0000" stop-color="rgb(40,40,40)"/></linearGradient>
<linearGradient id="bandg" gradientUnits="userSpaceOnUse" x1="380.88" y1="0" x2="822.19" y2="0"><stop offset="0.0000" stop-color="rgb(9,9,9)"/><stop offset="0.0005" stop-color="rgb(9,9,9)"/><stop offset="0.0011" stop-color="rgb(9,9,9)"/><stop offset="0.0019" stop-color="rgb(9,9,9)"/><stop offset="0.0028" stop-color="rgb(9,9,9)"/><stop offset="0.0038" stop-color="rgb(9,9,9)"/><stop offset="0.0049" stop-color="rgb(9,9,9)"/><stop offset="0.0062" stop-color="rgb(9,9,9)"/><stop offset="0.0076" stop-color="rgb(9,9,9)"/><stop offset="0.0091" stop-color="rgb(9,9,9)"/><stop offset="0.0107" stop-color="rgb(9,9,9)"/><stop offset="0.0125" stop-color="rgb(10,10,10)"/><stop offset="0.0144" stop-color="rgb(10,10,10)"/><stop offset="0.0164" stop-color="rgb(10,10,10)"/><stop offset="0.0186" stop-color="rgb(10,10,10)"/><stop offset="0.0208" stop-color="rgb(11,11,11)"/><stop offset="0.0233" stop-color="rgb(11,11,11)"/><stop offset="0.0258" stop-color="rgb(11,11,11)"/><stop offset="0.0285" stop-color="rgb(11,11,11)"/><stop offset="0.0313" stop-color="rgb(11,11,11)"/><stop offset="0.0342" stop-color="rgb(11,11,11)"/><stop offset="0.0373" stop-color="rgb(11,11,11)"/><stop offset="0.0405" stop-color="rgb(11,11,11)"/><stop offset="0.0438" stop-color="rgb(11,11,11)"/><stop offset="0.0472" stop-color="rgb(12,12,12)"/><stop offset="0.0508" stop-color="rgb(12,12,12)"/><stop offset="0.0545" stop-color="rgb(12,12,12)"/><stop offset="0.0584" stop-color="rgb(12,12,12)"/><stop offset="0.0623" stop-color="rgb(12,12,12)"/><stop offset="0.0664" stop-color="rgb(13,13,13)"/><stop offset="0.0706" stop-color="rgb(13,13,13)"/><stop offset="0.0750" stop-color="rgb(13,13,13)"/><stop offset="0.0795" stop-color="rgb(14,14,14)"/><stop offset="0.0841" stop-color="rgb(14,14,14)"/><stop offset="0.0888" stop-color="rgb(14,14,14)"/><stop offset="0.0936" stop-color="rgb(14,14,14)"/><stop offset="0.0986" stop-color="rgb(15,15,15)"/><stop offset="0.1037" stop-color="rgb(15,15,15)"/><stop offset="0.1089" stop-color="rgb(15,15,15)"/><stop offset="0.1143" stop-color="rgb(15,15,15)"/><stop offset="0.1197" stop-color="rgb(15,15,15)"/><stop offset="0.1253" stop-color="rgb(16,16,16)"/><stop offset="0.1310" stop-color="rgb(16,16,16)"/><stop offset="0.1368" stop-color="rgb(16,16,16)"/><stop offset="0.1427" stop-color="rgb(16,16,16)"/><stop offset="0.1488" stop-color="rgb(16,16,16)"/><stop offset="0.1549" stop-color="rgb(16,16,16)"/><stop offset="0.1612" stop-color="rgb(17,17,17)"/><stop offset="0.1676" stop-color="rgb(17,17,17)"/><stop offset="0.1741" stop-color="rgb(17,17,17)"/><stop offset="0.1806" stop-color="rgb(17,17,17)"/><stop offset="0.1873" stop-color="rgb(17,17,17)"/><stop offset="0.1941" stop-color="rgb(17,17,17)"/><stop offset="0.2010" stop-color="rgb(17,17,17)"/><stop offset="0.2080" stop-color="rgb(17,17,17)"/><stop offset="0.2151" stop-color="rgb(17,17,17)"/><stop offset="0.2223" stop-color="rgb(18,18,18)"/><stop offset="0.2296" stop-color="rgb(18,18,18)"/><stop offset="0.2369" stop-color="rgb(18,18,18)"/><stop offset="0.2444" stop-color="rgb(18,18,18)"/><stop offset="0.2519" stop-color="rgb(19,19,19)"/><stop offset="0.2596" stop-color="rgb(19,19,19)"/><stop offset="0.2673" stop-color="rgb(19,19,19)"/><stop offset="0.2751" stop-color="rgb(19,19,19)"/><stop offset="0.2829" stop-color="rgb(19,19,19)"/><stop offset="0.2909" stop-color="rgb(19,19,19)"/><stop offset="0.2989" stop-color="rgb(19,19,19)"/><stop offset="0.3069" stop-color="rgb(19,19,19)"/><stop offset="0.3151" stop-color="rgb(19,19,19)"/><stop offset="0.3233" stop-color="rgb(19,19,19)"/><stop offset="0.3316" stop-color="rgb(19,19,19)"/><stop offset="0.3399" stop-color="rgb(19,19,19)"/><stop offset="0.3483" stop-color="rgb(19,19,19)"/><stop offset="0.3567" stop-color="rgb(19,19,19)"/><stop offset="0.3652" stop-color="rgb(20,20,20)"/><stop offset="0.3737" stop-color="rgb(20,20,20)"/><stop offset="0.3823" stop-color="rgb(20,20,20)"/><stop offset="0.3909" stop-color="rgb(20,20,20)"/><stop offset="0.3996" stop-color="rgb(20,20,20)"/><stop offset="0.4083" stop-color="rgb(20,20,20)"/><stop offset="0.4170" stop-color="rgb(21,21,21)"/><stop offset="0.4257" stop-color="rgb(21,21,21)"/><stop offset="0.4345" stop-color="rgb(21,21,21)"/><stop offset="0.4433" stop-color="rgb(21,21,21)"/><stop offset="0.4521" stop-color="rgb(21,21,21)"/><stop offset="0.4610" stop-color="rgb(20,20,20)"/><stop offset="0.4698" stop-color="rgb(20,20,20)"/><stop offset="0.4787" stop-color="rgb(20,20,20)"/><stop offset="0.4875" stop-color="rgb(20,20,20)"/><stop offset="0.4964" stop-color="rgb(20,20,20)"/><stop offset="0.5053" stop-color="rgb(20,20,20)"/><stop offset="0.5141" stop-color="rgb(20,20,20)"/><stop offset="0.5230" stop-color="rgb(20,20,20)"/><stop offset="0.5319" stop-color="rgb(20,20,20)"/><stop offset="0.5407" stop-color="rgb(20,20,20)"/><stop offset="0.5495" stop-color="rgb(20,20,20)"/><stop offset="0.5583" stop-color="rgb(20,20,20)"/><stop offset="0.5671" stop-color="rgb(20,20,20)"/><stop offset="0.5759" stop-color="rgb(20,20,20)"/><stop offset="0.5846" stop-color="rgb(20,20,20)"/><stop offset="0.5933" stop-color="rgb(20,20,20)"/><stop offset="0.6020" stop-color="rgb(20,20,20)"/><stop offset="0.6106" stop-color="rgb(20,20,20)"/><stop offset="0.6192" stop-color="rgb(20,20,20)"/><stop offset="0.6278" stop-color="rgb(20,20,20)"/><stop offset="0.6363" stop-color="rgb(20,20,20)"/><stop offset="0.6448" stop-color="rgb(20,20,20)"/><stop offset="0.6532" stop-color="rgb(20,20,20)"/><stop offset="0.6615" stop-color="rgb(20,20,20)"/><stop offset="0.6698" stop-color="rgb(20,20,20)"/><stop offset="0.6781" stop-color="rgb(20,20,20)"/><stop offset="0.6863" stop-color="rgb(20,20,20)"/><stop offset="0.6944" stop-color="rgb(20,20,20)"/><stop offset="0.7024" stop-color="rgb(20,20,20)"/><stop offset="0.7104" stop-color="rgb(20,20,20)"/><stop offset="0.7183" stop-color="rgb(20,20,20)"/><stop offset="0.7261" stop-color="rgb(20,20,20)"/><stop offset="0.7339" stop-color="rgb(20,20,20)"/><stop offset="0.7415" stop-color="rgb(20,20,20)"/><stop offset="0.7491" stop-color="rgb(19,19,19)"/><stop offset="0.7566" stop-color="rgb(19,19,19)"/><stop offset="0.7641" stop-color="rgb(19,19,19)"/><stop offset="0.7714" stop-color="rgb(19,19,19)"/><stop offset="0.7786" stop-color="rgb(18,18,18)"/><stop offset="0.7858" stop-color="rgb(18,18,18)"/><stop offset="0.7928" stop-color="rgb(18,18,18)"/><stop offset="0.7998" stop-color="rgb(17,17,17)"/><stop offset="0.8066" stop-color="rgb(17,17,17)"/><stop offset="0.8134" stop-color="rgb(17,17,17)"/><stop offset="0.8200" stop-color="rgb(17,17,17)"/><stop offset="0.8266" stop-color="rgb(17,17,17)"/><stop offset="0.8330" stop-color="rgb(17,17,17)"/><stop offset="0.8394" stop-color="rgb(17,17,17)"/><stop offset="0.8456" stop-color="rgb(16,16,16)"/><stop offset="0.8517" stop-color="rgb(16,16,16)"/><stop offset="0.8577" stop-color="rgb(16,16,16)"/><stop offset="0.8636" stop-color="rgb(16,16,16)"/><stop offset="0.8694" stop-color="rgb(16,16,16)"/><stop offset="0.8750" stop-color="rgb(16,16,16)"/><stop offset="0.8806" stop-color="rgb(16,16,16)"/><stop offset="0.8860" stop-color="rgb(15,15,15)"/><stop offset="0.8913" stop-color="rgb(15,15,15)"/><stop offset="0.8965" stop-color="rgb(15,15,15)"/><stop offset="0.9015" stop-color="rgb(15,15,15)"/><stop offset="0.9065" stop-color="rgb(15,15,15)"/><stop offset="0.9113" stop-color="rgb(15,15,15)"/><stop offset="0.9160" stop-color="rgb(15,15,15)"/><stop offset="0.9205" stop-color="rgb(15,15,15)"/><stop offset="0.9250" stop-color="rgb(14,14,14)"/><stop offset="0.9293" stop-color="rgb(14,14,14)"/><stop offset="0.9335" stop-color="rgb(14,14,14)"/><stop offset="0.9376" stop-color="rgb(14,14,14)"/><stop offset="0.9415" stop-color="rgb(14,14,14)"/><stop offset="0.9453" stop-color="rgb(14,14,14)"/><stop offset="0.9490" stop-color="rgb(13,13,13)"/><stop offset="0.9526" stop-color="rgb(13,13,13)"/><stop offset="0.9560" stop-color="rgb(13,13,13)"/><stop offset="0.9593" stop-color="rgb(12,12,12)"/><stop offset="0.9625" stop-color="rgb(12,12,12)"/><stop offset="0.9655" stop-color="rgb(12,12,12)"/><stop offset="0.9684" stop-color="rgb(11,11,11)"/><stop offset="0.9712" stop-color="rgb(11,11,11)"/><stop offset="0.9738" stop-color="rgb(11,11,11)"/><stop offset="0.9764" stop-color="rgb(11,11,11)"/><stop offset="0.9788" stop-color="rgb(11,11,11)"/><stop offset="0.9810" stop-color="rgb(11,11,11)"/><stop offset="0.9832" stop-color="rgb(10,10,10)"/><stop offset="0.9852" stop-color="rgb(10,10,10)"/><stop offset="0.9871" stop-color="rgb(10,10,10)"/><stop offset="0.9889" stop-color="rgb(10,10,10)"/><stop offset="0.9905" stop-color="rgb(10,10,10)"/><stop offset="0.9920" stop-color="rgb(10,10,10)"/><stop offset="0.9934" stop-color="rgb(10,10,10)"/><stop offset="0.9946" stop-color="rgb(10,10,10)"/><stop offset="0.9958" stop-color="rgb(10,10,10)"/><stop offset="0.9968" stop-color="rgb(10,10,10)"/><stop offset="0.9977" stop-color="rgb(10,10,10)"/><stop offset="0.9984" stop-color="rgb(10,10,10)"/><stop offset="0.9991" stop-color="rgb(10,10,10)"/><stop offset="0.9996" stop-color="rgb(10,10,10)"/><stop offset="1.0000" stop-color="rgb(10,10,10)"/></linearGradient>
<linearGradient id="rimg" gradientUnits="userSpaceOnUse" x1="0" y1="154" x2="0" y2="336">
<stop offset="0" stop-color="#555"/><stop offset="0.6" stop-color="#5a5a5a"/><stop offset="0.85" stop-color="#747474"/><stop offset="0.95" stop-color="#8a8a8a"/><stop offset="1" stop-color="#7c7c7c"/>
</linearGradient>
</defs>
<path d="M362.22 240.88 L362.42 242.25 L362.67 243.62 L362.99 244.99 L363.36 246.36 L363.79 247.73 L364.28 249.10 L364.83 250.47 L365.44 251.84 L366.11 253.21 L366.85 254.58 L367.64 255.94 L368.50 257.31 L369.41 258.67 L370.39 260.03 L371.43 261.38 L372.53 262.74 L373.70 264.08 L374.92 265.43 L376.21 266.77 L377.56 268.10 L378.98 269.43 L380.45 270.75 L381.99 272.06 L383.59 273.37 L385.26 274.67 L386.98 275.96 L388.77 277.25 L390.62 278.52 L392.54 279.79 L394.51 281.05 L396.55 282.29 L398.64 283.53 L400.80 284.75 L403.02 285.96 L405.30 287.16 L407.64 288.35 L410.04 289.53 L412.49 290.69 L415.01 291.83 L417.59 292.97 L420.22 294.09 L422.91 295.19 L425.66 296.28 L428.46 297.35 L431.32 298.40 L434.23 299.44 L437.20 300.46 L440.22 301.47 L443.29 302.45 L446.42 303.42 L449.59 304.36 L452.82 305.29 L456.09 306.20 L459.42 307.08 L462.79 307.95 L466.21 308.79 L469.67 309.62 L473.18 310.42 L476.73 311.20 L480.32 311.96 L483.96 312.69 L487.63 313.40 L491.35 314.09 L495.10 314.75 L498.89 315.39 L502.71 316.00 L506.57 316.59 L510.46 317.15 L514.38 317.69 L518.33 318.21 L522.31 318.69 L526.32 319.15 L530.35 319.59 L534.41 320.00 L538.49 320.38 L542.60 320.73 L546.72 321.06 L550.86 321.36 L555.02 321.63 L559.20 321.87 L563.39 322.09 L567.59 322.28 L571.81 322.44 L576.03 322.57 L580.26 322.68 L584.50 322.75 L588.75 322.80 L593.00 322.82 L597.24 322.81 L601.50 322.78 L605.74 322.71 L609.99 322.62 L614.23 322.50 L618.47 322.35 L622.70 322.17 L626.92 321.97 L631.13 321.74 L635.33 321.48 L639.51 321.19 L643.68 320.87 L647.84 320.53 L651.97 320.16 L656.09 319.77 L660.18 319.34 L664.26 318.89 L668.31 318.42 L672.33 317.92 L676.33 317.39 L680.30 316.84 L684.24 316.26 L688.15 315.66 L692.03 315.03 L695.88 314.38 L699.69 313.70 L703.46 313.00 L707.20 312.28 L710.91 311.53 L714.57 310.76 L718.19 309.97 L721.77 309.15 L725.31 308.32 L728.80 307.46 L732.25 306.58 L735.66 305.68 L739.01 304.77 L742.33 303.83 L745.59 302.87 L748.80 301.89 L751.96 300.90 L755.08 299.89 L758.14 298.85 L761.14 297.81 L764.10 296.74 L767.00 295.66 L769.85 294.56 L772.64 293.45 L775.37 292.33 L778.05 291.18 L780.67 290.03 L783.24 288.86 L785.75 287.68 L788.19 286.48 L790.58 285.27 L792.91 284.06 L795.19 282.83 L797.40 281.58 L799.55 280.33 L801.64 279.07 L803.67 277.80 L805.64 276.52 L807.54 275.23 L809.39 273.93 L811.18 272.63 L812.90 271.32 L814.56 270.00 L816.16 268.67 L817.70 267.34 L819.18 266.01 L820.59 264.67 L821.94 263.32 L823.23 261.97 L824.46 260.61 L825.63 259.26 L826.74 257.90 L827.78 256.53 L828.77 255.17 L829.69 253.80 L830.55 252.43 L831.36 251.06 L832.10 249.69 L832.78 248.32 L833.40 246.95 L833.96 245.58 L834.46 244.21 L834.91 242.84 L835.29 241.47 L835.62 240.11 L835.89 238.75 L836.10 237.39 L836.26 236.03 L828.83 316.04 L828.67 317.54 L828.44 319.04 L828.17 320.55 L827.83 322.06 L827.44 323.57 L827.00 325.08 L826.50 326.60 L825.94 328.11 L825.32 329.63 L824.65 331.14 L823.92 332.66 L823.13 334.17 L822.28 335.68 L821.37 337.19 L820.41 338.70 L819.39 340.20 L818.30 341.70 L817.16 343.20 L815.96 344.70 L814.70 346.18 L813.39 347.67 L812.01 349.15 L810.57 350.62 L809.08 352.09 L807.52 353.55 L805.91 355.00 L804.24 356.45 L802.51 357.88 L800.72 359.31 L798.87 360.73 L796.96 362.14 L795.00 363.54 L792.97 364.92 L790.89 366.30 L788.76 367.67 L786.56 369.02 L784.31 370.36 L782.00 371.69 L779.64 373.00 L777.22 374.30 L774.75 375.58 L772.22 376.85 L769.63 378.11 L767.00 379.35 L764.31 380.57 L761.57 381.77 L758.77 382.96 L755.93 384.13 L753.03 385.28 L750.09 386.41 L747.09 387.52 L744.05 388.61 L740.96 389.68 L737.82 390.73 L734.64 391.76 L731.41 392.77 L728.14 393.75 L724.83 394.72 L721.47 395.66 L718.07 396.57 L714.63 397.46 L711.16 398.33 L707.64 399.17 L704.09 399.99 L700.50 400.79 L696.88 401.55 L693.22 402.29 L689.53 403.01 L685.81 403.70 L682.06 404.36 L678.28 404.99 L674.47 405.59 L670.64 406.17 L666.78 406.72 L662.89 407.24 L658.99 407.73 L655.06 408.20 L651.12 408.63 L647.16 409.03 L643.17 409.41 L639.18 409.75 L635.17 410.07 L631.15 410.35 L627.11 410.61 L623.07 410.83 L619.01 411.02 L614.96 411.19 L610.89 411.32 L606.82 411.42 L602.75 411.49 L598.68 411.53 L594.61 411.54 L590.54 411.52 L586.47 411.46 L582.41 411.38 L578.35 411.26 L574.30 411.12 L570.27 410.94 L566.24 410.74 L562.22 410.50 L558.22 410.23 L554.23 409.94 L550.26 409.61 L546.31 409.25 L542.37 408.86 L538.46 408.45 L534.57 408.00 L530.70 407.52 L526.85 407.02 L523.03 406.49 L519.24 405.93 L515.48 405.34 L511.75 404.72 L508.04 404.07 L504.37 403.40 L500.74 402.70 L497.13 401.98 L493.57 401.22 L490.04 400.45 L486.54 399.64 L483.09 398.81 L479.68 397.96 L476.30 397.08 L472.97 396.18 L469.69 395.25 L466.44 394.30 L463.25 393.33 L460.09 392.34 L456.99 391.32 L453.93 390.28 L450.92 389.22 L447.96 388.14 L445.05 387.04 L442.19 385.92 L439.38 384.78 L436.62 383.62 L433.92 382.45 L431.27 381.25 L428.67 380.04 L426.13 378.81 L423.64 377.57 L421.21 376.31 L418.83 375.03 L416.51 373.74 L414.24 372.44 L412.04 371.12 L409.89 369.78 L407.80 368.44 L405.76 367.08 L403.79 365.71 L401.87 364.33 L400.02 362.93 L398.22 361.53 L396.48 360.12 L394.80 358.69 L393.18 357.26 L391.62 355.82 L390.12 354.37 L388.68 352.92 L387.30 351.46 L385.97 349.99 L384.71 348.51 L383.51 347.03 L382.37 345.54 L381.28 344.05 L380.26 342.56 L379.30 341.06 L378.39 339.55 L377.55 338.05 L376.76 336.54 L376.03 335.03 L375.36 333.52 L374.75 332.00 L374.19 330.49 L373.70 328.97 L373.26 327.46 L372.88 325.95 L372.55 324.43 L372.28 322.92 L372.07 321.41 Z" fill="url(#sideg)"/>
<path d="M389.11 460.81 L389.35 462.54 L389.64 464.27 L389.98 465.99 L390.38 467.72 L390.83 469.45 L391.33 471.18 L391.88 472.91 L392.49 474.63 L393.16 476.35 L393.87 478.08 L394.65 479.79 L395.47 481.51 L396.35 483.22 L397.29 484.93 L398.28 486.63 L399.33 488.32 L400.43 490.01 L401.58 491.70 L402.79 493.37 L404.06 495.04 L405.38 496.70 L406.76 498.36 L408.19 500.00 L409.67 501.63 L411.22 503.26 L412.81 504.87 L414.46 506.47 L416.17 508.06 L417.93 509.64 L419.74 511.20 L421.60 512.76 L423.52 514.29 L425.50 515.82 L427.52 517.32 L429.60 518.82 L431.73 520.29 L433.92 521.75 L436.15 523.19 L438.44 524.62 L440.77 526.02 L443.16 527.41 L445.59 528.78 L448.08 530.13 L450.61 531.45 L453.19 532.76 L455.82 534.04 L458.49 535.31 L461.21 536.55 L463.98 537.76 L466.79 538.96 L469.64 540.13 L472.54 541.27 L475.48 542.39 L478.46 543.49 L481.48 544.55 L484.55 545.60 L487.65 546.61 L490.79 547.60 L493.96 548.56 L497.17 549.49 L500.42 550.40 L503.70 551.27 L507.02 552.12 L510.36 552.93 L513.74 553.72 L517.15 554.47 L520.59 555.20 L524.05 555.89 L527.54 556.55 L531.06 557.18 L534.60 557.78 L538.17 558.35 L541.75 558.88 L545.36 559.38 L548.99 559.85 L552.63 560.28 L556.30 560.68 L559.97 561.05 L563.67 561.38 L567.37 561.68 L571.09 561.95 L574.82 562.18 L578.56 562.38 L582.31 562.54 L586.06 562.67 L589.82 562.76 L593.59 562.82 L597.35 562.85 L601.12 562.84 L604.89 562.79 L608.66 562.72 L612.43 562.60 L616.19 562.45 L619.94 562.27 L623.69 562.05 L627.44 561.80 L631.17 561.52 L634.90 561.20 L638.61 560.85 L642.31 560.46 L645.99 560.04 L649.66 559.59 L653.32 559.10 L656.95 558.58 L660.57 558.03 L664.17 557.44 L667.74 556.83 L671.29 556.18 L674.82 555.50 L678.33 554.79 L681.80 554.05 L685.25 553.27 L688.68 552.47 L692.07 551.64 L695.43 550.78 L698.76 549.89 L702.06 548.97 L705.32 548.02 L708.55 547.04 L711.75 546.04 L714.91 545.01 L718.03 543.95 L721.11 542.87 L724.15 541.76 L727.16 540.62 L730.12 539.46 L733.04 538.28 L735.92 537.07 L738.75 535.84 L741.54 534.59 L744.29 533.32 L746.99 532.02 L749.64 530.70 L752.25 529.36 L754.81 528.00 L757.33 526.62 L759.79 525.23 L762.21 523.81 L764.58 522.38 L766.89 520.92 L769.16 519.46 L771.37 517.97 L773.54 516.47 L775.65 514.95 L777.71 513.42 L779.72 511.88 L781.68 510.32 L783.58 508.74 L785.43 507.16 L787.23 505.56 L788.97 503.95 L790.66 502.34 L792.30 500.71 L793.88 499.07 L795.40 497.42 L796.88 495.76 L798.29 494.09 L799.66 492.42 L800.97 490.74 L802.22 489.05 L803.42 487.36 L804.57 485.66 L805.66 483.96 L806.69 482.25 L807.68 480.53 L808.60 478.82 L809.48 477.10 L810.30 475.38 L811.06 473.65 L811.77 471.92 L812.43 470.20 L813.03 468.47 L813.59 466.74 L814.08 465.01 L814.53 463.28 L814.92 461.56 L815.26 459.83 L815.55 458.11 L815.79 456.39 L815.97 454.67 L810.42 514.46 L810.23 516.26 L809.99 518.06 L809.70 519.86 L809.36 521.67 L808.96 523.47 L808.52 525.28 L808.03 527.09 L807.48 528.90 L806.88 530.70 L806.23 532.51 L805.53 534.31 L804.78 536.11 L803.97 537.91 L803.11 539.71 L802.20 541.50 L801.24 543.29 L800.22 545.08 L799.16 546.85 L798.04 548.63 L796.86 550.40 L795.64 552.16 L794.36 553.91 L793.03 555.66 L791.64 557.39 L790.21 559.12 L788.72 560.84 L787.18 562.55 L785.58 564.25 L783.94 565.94 L782.24 567.61 L780.49 569.28 L778.69 570.93 L776.84 572.57 L774.94 574.19 L772.99 575.80 L770.98 577.40 L768.93 578.98 L766.83 580.54 L764.68 582.09 L762.48 583.61 L760.23 585.13 L757.93 586.62 L755.59 588.09 L753.20 589.55 L750.76 590.98 L748.28 592.40 L745.75 593.79 L743.17 595.16 L740.56 596.51 L737.90 597.83 L735.19 599.14 L732.45 600.42 L729.66 601.67 L726.83 602.90 L723.96 604.11 L721.06 605.28 L718.11 606.44 L715.13 607.56 L712.11 608.66 L709.05 609.73 L705.96 610.77 L702.84 611.79 L699.68 612.77 L696.49 613.73 L693.27 614.65 L690.02 615.55 L686.74 616.41 L683.43 617.25 L680.10 618.05 L676.74 618.82 L673.35 619.56 L669.94 620.26 L666.51 620.94 L663.06 621.58 L659.58 622.18 L656.09 622.76 L652.57 623.29 L649.04 623.80 L645.50 624.27 L641.94 624.71 L638.37 625.11 L634.78 625.47 L631.18 625.80 L627.58 626.10 L623.96 626.36 L620.34 626.59 L616.71 626.78 L613.08 626.93 L609.44 627.05 L605.80 627.13 L602.16 627.17 L598.52 627.19 L594.88 627.16 L591.25 627.10 L587.62 627.00 L583.99 626.87 L580.37 626.70 L576.76 626.49 L573.16 626.25 L569.57 625.98 L565.98 625.67 L562.42 625.32 L558.86 624.94 L555.32 624.52 L551.80 624.07 L548.30 623.59 L544.81 623.07 L541.34 622.51 L537.90 621.92 L534.47 621.30 L531.07 620.65 L527.70 619.96 L524.35 619.24 L521.02 618.49 L517.73 617.71 L514.46 616.89 L511.22 616.04 L508.02 615.17 L504.84 614.26 L501.70 613.32 L498.59 612.35 L495.52 611.35 L492.48 610.33 L489.48 609.27 L486.51 608.19 L483.59 607.08 L480.70 605.94 L477.85 604.78 L475.04 603.59 L472.28 602.37 L469.55 601.13 L466.87 599.87 L464.23 598.58 L461.64 597.27 L459.09 595.93 L456.58 594.57 L454.12 593.19 L451.71 591.79 L449.35 590.37 L447.03 588.92 L444.76 587.46 L442.54 585.98 L440.37 584.48 L438.24 582.96 L436.17 581.42 L434.15 579.87 L432.18 578.30 L430.25 576.71 L428.38 575.11 L426.57 573.49 L424.80 571.86 L423.08 570.22 L421.42 568.56 L419.81 566.89 L418.25 565.21 L416.75 563.52 L415.29 561.81 L413.89 560.10 L412.55 558.38 L411.25 556.64 L410.01 554.90 L408.82 553.15 L407.69 551.40 L406.61 549.63 L405.58 547.86 L404.60 546.09 L403.68 544.31 L402.81 542.52 L402.00 540.73 L401.23 538.93 L400.52 537.14 L399.86 535.34 L399.26 533.53 L398.70 531.73 L398.20 529.92 L397.75 528.12 L397.35 526.31 L397.00 524.50 L396.71 522.69 L396.46 520.89 Z" fill="url(#sideg2)"/>
<path d="M371.55 317.16 L371.76 318.66 L372.03 320.17 L372.35 321.67 L372.74 323.18 L373.17 324.69 L373.67 326.20 L374.22 327.70 L374.84 329.21 L375.51 330.71 L376.24 332.22 L377.02 333.72 L377.87 335.22 L378.78 336.71 L379.74 338.21 L380.76 339.69 L381.85 341.18 L382.99 342.66 L384.20 344.13 L385.46 345.60 L386.78 347.06 L388.17 348.52 L389.61 349.97 L391.11 351.41 L392.67 352.84 L394.30 354.27 L395.98 355.69 L397.72 357.09 L399.52 358.49 L401.38 359.88 L403.30 361.25 L405.28 362.62 L407.32 363.97 L409.41 365.31 L411.56 366.64 L413.77 367.95 L416.04 369.25 L418.37 370.53 L420.75 371.80 L423.18 373.06 L425.68 374.30 L428.22 375.52 L430.83 376.73 L433.48 377.92 L436.19 379.09 L438.96 380.24 L441.77 381.38 L444.64 382.49 L447.55 383.59 L450.52 384.66 L453.53 385.72 L456.60 386.75 L459.71 387.76 L462.87 388.75 L466.08 389.72 L469.32 390.67 L472.62 391.59 L475.96 392.49 L479.34 393.36 L482.76 394.21 L486.22 395.04 L489.72 395.84 L493.25 396.61 L496.83 397.36 L500.44 398.08 L504.08 398.78 L507.76 399.45 L511.47 400.09 L515.22 400.71 L518.99 401.29 L522.79 401.85 L526.61 402.38 L530.47 402.88 L534.34 403.36 L538.25 403.80 L542.17 404.22 L546.11 404.60 L550.07 404.96 L554.05 405.28 L558.05 405.58 L562.06 405.85 L566.09 406.08 L570.13 406.29 L574.17 406.46 L578.23 406.61 L582.30 406.72 L586.37 406.81 L590.44 406.86 L594.52 406.88 L598.60 406.87 L602.68 406.83 L606.77 406.76 L610.84 406.66 L614.92 406.53 L618.99 406.37 L623.05 406.18 L627.10 405.95 L631.14 405.70 L635.18 405.42 L639.20 405.10 L643.20 404.76 L647.19 404.39 L651.16 403.98 L655.12 403.55 L659.05 403.09 L662.97 402.60 L666.86 402.08 L670.73 401.54 L674.57 400.96 L678.38 400.36 L682.17 399.73 L685.93 399.07 L689.66 398.39 L693.36 397.68 L697.02 396.94 L700.65 396.17 L704.25 395.38 L707.81 394.57 L711.34 393.73 L714.82 392.87 L718.27 391.98 L721.67 391.07 L725.04 390.13 L728.36 389.17 L731.64 388.19 L734.87 387.19 L738.06 386.16 L741.20 385.12 L744.30 384.05 L747.35 382.97 L750.35 381.86 L753.30 380.73 L756.20 379.59 L759.05 378.42 L761.85 377.24 L764.60 376.04 L767.29 374.83 L769.94 373.60 L772.52 372.35 L775.06 371.08 L777.54 369.80 L779.96 368.51 L782.33 367.20 L784.64 365.88 L786.90 364.55 L789.09 363.20 L791.24 361.84 L793.32 360.47 L795.35 359.09 L797.31 357.70 L799.22 356.29 L801.08 354.88 L802.87 353.46 L804.60 352.03 L806.28 350.59 L807.89 349.15 L809.45 347.69 L810.95 346.23 L812.39 344.77 L813.77 343.30 L815.09 341.82 L816.35 340.34 L817.55 338.85 L818.69 337.36 L819.77 335.86 L820.80 334.37 L821.76 332.87 L822.67 331.36 L823.52 329.86 L824.31 328.35 L825.04 326.85 L825.71 325.34 L826.33 323.83 L826.89 322.32 L827.39 320.82 L827.84 319.31 L828.23 317.81 L828.56 316.31 L828.84 314.81 L829.06 313.31 L829.22 311.81 L815.46 460.18 L815.27 461.90 L815.04 463.63 L814.75 465.36 L814.41 467.10 L814.02 468.83 L813.57 470.57 L813.07 472.30 L812.52 474.04 L811.92 475.78 L811.26 477.51 L810.55 479.24 L809.79 480.98 L808.97 482.71 L808.10 484.43 L807.17 486.16 L806.19 487.88 L805.16 489.59 L804.07 491.31 L802.92 493.01 L801.73 494.71 L800.48 496.41 L799.17 498.09 L797.81 499.78 L796.39 501.45 L794.92 503.11 L793.40 504.77 L791.82 506.41 L790.19 508.05 L788.51 509.68 L786.77 511.29 L784.97 512.89 L783.13 514.49 L781.23 516.06 L779.28 517.63 L777.28 519.18 L775.22 520.72 L773.11 522.24 L770.95 523.75 L768.74 525.24 L766.48 526.71 L764.17 528.17 L761.81 529.61 L759.40 531.03 L756.95 532.44 L754.44 533.82 L751.89 535.19 L749.28 536.53 L746.64 537.85 L743.94 539.16 L741.21 540.44 L738.42 541.69 L735.60 542.93 L732.73 544.14 L729.81 545.33 L726.86 546.49 L723.87 547.63 L720.83 548.74 L717.76 549.83 L714.65 550.89 L711.50 551.93 L708.32 552.93 L705.10 553.91 L701.84 554.86 L698.55 555.79 L695.23 556.68 L691.88 557.55 L688.50 558.38 L685.09 559.19 L681.65 559.96 L678.18 560.71 L674.69 561.42 L671.17 562.11 L667.63 562.76 L664.06 563.37 L660.48 563.96 L656.87 564.52 L653.25 565.04 L649.61 565.53 L645.95 565.98 L642.27 566.40 L638.59 566.79 L634.88 567.14 L631.17 567.46 L627.45 567.75 L623.72 568.00 L619.98 568.22 L616.24 568.40 L612.49 568.55 L608.73 568.67 L604.98 568.75 L601.22 568.79 L597.46 568.80 L593.71 568.78 L589.95 568.72 L586.21 568.62 L582.46 568.49 L578.73 568.33 L575.00 568.13 L571.28 567.90 L567.58 567.63 L563.88 567.33 L560.20 567.00 L556.53 566.63 L552.88 566.22 L549.25 565.79 L545.63 565.32 L542.03 564.82 L538.46 564.28 L534.91 563.71 L531.37 563.11 L527.87 562.48 L524.39 561.81 L520.93 561.12 L517.51 560.39 L514.11 559.63 L510.74 558.85 L507.41 558.03 L504.10 557.18 L500.83 556.30 L497.59 555.39 L494.39 554.46 L491.22 553.49 L488.09 552.50 L485.00 551.48 L481.95 550.44 L478.94 549.36 L475.96 548.27 L473.03 547.14 L470.14 545.99 L467.30 544.82 L464.49 543.62 L461.74 542.40 L459.02 541.15 L456.36 539.89 L453.74 538.60 L451.16 537.29 L448.64 535.95 L446.16 534.60 L443.73 533.23 L441.35 531.83 L439.02 530.42 L436.74 528.99 L434.51 527.55 L432.34 526.08 L430.21 524.60 L428.14 523.10 L426.11 521.59 L424.15 520.06 L422.23 518.51 L420.37 516.96 L418.56 515.38 L416.80 513.80 L415.10 512.20 L413.46 510.60 L411.87 508.98 L410.33 507.35 L408.84 505.71 L407.42 504.05 L406.04 502.40 L404.72 500.73 L403.46 499.05 L402.25 497.37 L401.10 495.68 L400.00 493.98 L398.95 492.28 L397.96 490.57 L397.03 488.85 L396.15 487.14 L395.32 485.41 L394.55 483.69 L393.84 481.96 L393.17 480.23 L392.56 478.50 L392.01 476.76 L391.51 475.03 L391.06 473.29 L390.66 471.55 L390.32 469.82 L390.03 468.08 L389.79 466.35 Z" fill="url(#bandg)"/>
<clipPath id="tclip"><path d="M604.58 156.92 L601.08 156.93 L597.59 156.96 L594.09 157.01 L590.60 157.08 L587.10 157.16 L583.61 157.27 L580.12 157.40 L576.63 157.55 L573.15 157.71 L569.67 157.90 L566.20 158.10 L562.73 158.33 L559.27 158.57 L555.82 158.84 L552.37 159.12 L548.93 159.42 L545.50 159.75 L542.08 160.09 L538.67 160.45 L535.27 160.83 L531.89 161.23 L528.51 161.65 L525.15 162.09 L521.80 162.55 L518.46 163.02 L515.14 163.52 L511.84 164.03 L508.55 164.57 L505.28 165.12 L502.02 165.70 L498.79 166.29 L495.57 166.90 L492.37 167.53 L489.19 168.18 L486.04 168.85 L482.90 169.53 L479.79 170.24 L476.70 170.96 L473.63 171.71 L470.59 172.47 L467.57 173.25 L464.58 174.05 L461.62 174.87 L458.68 175.70 L455.78 176.55 L452.90 177.43 L450.05 178.32 L447.23 179.22 L444.45 180.15 L441.69 181.09 L438.97 182.05 L436.28 183.03 L433.63 184.03 L431.01 185.04 L428.43 186.07 L425.88 187.12 L423.38 188.19 L420.91 189.27 L418.48 190.37 L416.09 191.48 L413.74 192.61 L411.44 193.76 L409.18 194.92 L406.96 196.10 L404.78 197.30 L402.65 198.51 L400.57 199.74 L398.53 200.98 L396.55 202.24 L394.61 203.51 L392.72 204.79 L390.88 206.09 L389.09 207.41 L387.35 208.74 L385.67 210.08 L384.04 211.44 L382.47 212.80 L380.95 214.19 L379.49 215.58 L378.09 216.99 L376.74 218.41 L375.46 219.84 L374.23 221.28 L373.07 222.73 L371.96 224.19 L370.92 225.67 L369.95 227.15 L369.03 228.64 L368.18 230.15 L367.40 231.66 L366.69 233.18 L366.04 234.71 L365.46 236.25 L364.95 237.79 L364.51 239.34 L364.14 240.90 L363.84 242.46 L363.61 244.03 L363.46 245.61 L363.37 247.19 L363.37 248.77 L363.43 250.36 L363.58 251.95 L363.80 253.54 L364.09 255.13 L364.46 256.73 L364.91 258.33 L365.44 259.93 L366.04 261.53 L366.73 263.13 L367.49 264.72 L368.34 266.32 L369.26 267.91 L370.27 269.50 L371.35 271.09 L372.52 272.67 L373.77 274.25 L375.10 275.82 L376.51 277.38 L378.00 278.94 L379.57 280.50 L381.23 282.04 L382.97 283.58 L384.79 285.10 L386.69 286.62 L388.67 288.12 L390.74 289.62 L392.89 291.10 L395.11 292.57 L397.42 294.02 L399.81 295.46 L402.28 296.89 L404.83 298.30 L407.45 299.69 L410.16 301.07 L412.94 302.43 L415.80 303.77 L418.74 305.10 L421.75 306.40 L424.84 307.68 L428.00 308.94 L431.24 310.18 L434.54 311.40 L437.92 312.59 L441.37 313.76 L444.89 314.90 L448.47 316.02 L452.12 317.12 L455.84 318.19 L459.62 319.23 L463.46 320.24 L467.37 321.22 L471.33 322.18 L475.35 323.11 L479.43 324.00 L483.56 324.87 L487.74 325.70 L491.98 326.51 L496.26 327.28 L500.60 328.02 L504.98 328.72 L509.40 329.40 L513.86 330.03 L518.37 330.64 L522.91 331.21 L527.49 331.74 L532.10 332.24 L536.74 332.71 L541.42 333.13 L546.12 333.52 L550.84 333.88 L555.59 334.20 L560.36 334.48 L565.15 334.72 L569.95 334.93 L574.77 335.10 L579.60 335.23 L584.44 335.33 L589.29 335.38 L594.13 335.40 L598.99 335.38 L603.84 335.33 L608.69 335.23 L613.53 335.10 L618.37 334.93 L623.20 334.72 L628.02 334.48 L632.82 334.20 L637.60 333.88 L642.37 333.52 L647.12 333.13 L651.84 332.71 L656.54 332.24 L661.21 331.74 L665.85 331.21 L670.46 330.64 L675.04 330.03 L679.57 329.40 L684.08 328.72 L688.54 328.02 L692.96 327.28 L697.33 326.51 L701.66 325.70 L705.95 324.87 L710.18 324.00 L714.36 323.11 L718.49 322.18 L722.56 321.22 L726.58 320.24 L730.54 319.23 L734.45 318.19 L738.29 317.12 L742.07 316.02 L745.78 314.90 L749.43 313.76 L753.02 312.59 L756.53 311.40 L759.98 310.18 L763.36 308.94 L766.67 307.68 L769.91 306.40 L773.08 305.10 L776.17 303.77 L779.19 302.43 L782.13 301.07 L784.99 299.69 L787.78 298.30 L790.50 296.89 L793.13 295.46 L795.69 294.02 L798.17 292.57 L800.57 291.10 L802.89 289.62 L805.13 288.12 L807.29 286.62 L809.37 285.10 L811.37 283.58 L813.29 282.04 L815.12 280.50 L816.88 278.94 L818.55 277.38 L820.15 275.82 L821.66 274.25 L823.09 272.67 L824.45 271.09 L825.72 269.50 L826.91 267.91 L828.02 266.32 L829.05 264.72 L830.00 263.13 L830.87 261.53 L831.66 259.93 L832.38 258.33 L833.02 256.73 L833.57 255.13 L834.06 253.54 L834.46 251.95 L834.79 250.36 L835.04 248.77 L835.22 247.19 L835.32 245.61 L835.35 244.03 L835.31 242.46 L835.19 240.90 L835.00 239.34 L834.75 237.79 L834.42 236.25 L834.02 234.71 L833.55 233.18 L833.01 231.66 L832.40 230.15 L831.73 228.64 L830.99 227.15 L830.19 225.67 L829.32 224.19 L828.39 222.73 L827.39 221.28 L826.34 219.84 L825.22 218.41 L824.04 216.99 L822.80 215.58 L821.50 214.19 L820.15 212.80 L818.73 211.44 L817.26 210.08 L815.74 208.74 L814.16 207.41 L812.53 206.09 L810.84 204.79 L809.10 203.51 L807.31 202.24 L805.47 200.98 L803.58 199.74 L801.64 198.51 L799.65 197.30 L797.62 196.10 L795.54 194.92 L793.41 193.76 L791.24 192.61 L789.02 191.48 L786.76 190.37 L784.46 189.27 L782.12 188.19 L779.74 187.12 L777.32 186.07 L774.86 185.04 L772.36 184.03 L769.82 183.03 L767.25 182.05 L764.64 181.09 L761.99 180.15 L759.32 179.22 L756.60 178.32 L753.86 177.43 L751.08 176.55 L748.28 175.70 L745.44 174.87 L742.57 174.05 L739.67 173.25 L736.75 172.47 L733.80 171.71 L730.82 170.96 L727.81 170.24 L724.78 169.53 L721.73 168.85 L718.65 168.18 L715.55 167.53 L712.42 166.90 L709.28 166.29 L706.11 165.70 L702.92 165.12 L699.71 164.57 L696.49 164.03 L693.24 163.52 L689.98 163.02 L686.70 162.55 L683.41 162.09 L680.09 161.65 L676.77 161.23 L673.43 160.83 L670.07 160.45 L666.71 160.09 L663.33 159.75 L659.93 159.42 L656.53 159.12 L653.12 158.84 L649.69 158.57 L646.26 158.33 L642.82 158.10 L639.37 157.90 L635.92 157.71 L632.45 157.55 L628.98 157.40 L625.51 157.27 L622.03 157.16 L618.55 157.08 L615.06 157.01 L611.57 156.96 L608.07 156.93 L604.58 156.92 Z"/></clipPath>
<filter id="fblur" x="-5%" y="-5%" width="110%" height="110%"><feGaussianBlur stdDeviation="1.3"/></filter>
<g clip-path="url(#tclip)">
<path d="M604.58 156.92 L601.08 156.93 L597.59 156.96 L594.09 157.01 L590.60 157.08 L587.10 157.16 L583.61 157.27 L580.12 157.40 L576.63 157.55 L573.15 157.71 L569.67 157.90 L566.20 158.10 L562.73 158.33 L559.27 158.57 L555.82 158.84 L552.37 159.12 L548.93 159.42 L545.50 159.75 L542.08 160.09 L538.67 160.45 L535.27 160.83 L531.89 161.23 L528.51 161.65 L525.15 162.09 L521.80 162.55 L518.46 163.02 L515.14 163.52 L511.84 164.03 L508.55 164.57 L505.28 165.12 L502.02 165.70 L498.79 166.29 L495.57 166.90 L492.37 167.53 L489.19 168.18 L486.04 168.85 L482.90 169.53 L479.79 170.24 L476.70 170.96 L473.63 171.71 L470.59 172.47 L467.57 173.25 L464.58 174.05 L461.62 174.87 L458.68 175.70 L455.78 176.55 L452.90 177.43 L450.05 178.32 L447.23 179.22 L444.45 180.15 L441.69 181.09 L438.97 182.05 L436.28 183.03 L433.63 184.03 L431.01 185.04 L428.43 186.07 L425.88 187.12 L423.38 188.19 L420.91 189.27 L418.48 190.37 L416.09 191.48 L413.74 192.61 L411.44 193.76 L409.18 194.92 L406.96 196.10 L404.78 197.30 L402.65 198.51 L400.57 199.74 L398.53 200.98 L396.55 202.24 L394.61 203.51 L392.72 204.79 L390.88 206.09 L389.09 207.41 L387.35 208.74 L385.67 210.08 L384.04 211.44 L382.47 212.80 L380.95 214.19 L379.49 215.58 L378.09 216.99 L376.74 218.41 L375.46 219.84 L374.23 221.28 L373.07 222.73 L371.96 224.19 L370.92 225.67 L369.95 227.15 L369.03 228.64 L368.18 230.15 L367.40 231.66 L366.69 233.18 L366.04 234.71 L365.46 236.25 L364.95 237.79 L364.51 239.34 L364.14 240.90 L363.84 242.46 L363.61 244.03 L363.46 245.61 L363.37 247.19 L363.37 248.77 L363.43 250.36 L363.58 251.95 L363.80 253.54 L364.09 255.13 L364.46 256.73 L364.91 258.33 L365.44 259.93 L366.04 261.53 L366.73 263.13 L367.49 264.72 L368.34 266.32 L369.26 267.91 L370.27 269.50 L371.35 271.09 L372.52 272.67 L373.77 274.25 L375.10 275.82 L376.51 277.38 L378.00 278.94 L379.57 280.50 L381.23 282.04 L382.97 283.58 L384.79 285.10 L386.69 286.62 L388.67 288.12 L390.74 289.62 L392.89 291.10 L395.11 292.57 L397.42 294.02 L399.81 295.46 L402.28 296.89 L404.83 298.30 L407.45 299.69 L410.16 301.07 L412.94 302.43 L415.80 303.77 L418.74 305.10 L421.75 306.40 L424.84 307.68 L428.00 308.94 L431.24 310.18 L434.54 311.40 L437.92 312.59 L441.37 313.76 L444.89 314.90 L448.47 316.02 L452.12 317.12 L455.84 318.19 L459.62 319.23 L463.46 320.24 L467.37 321.22 L471.33 322.18 L475.35 323.11 L479.43 324.00 L483.56 324.87 L487.74 325.70 L491.98 326.51 L496.26 327.28 L500.60 328.02 L504.98 328.72 L509.40 329.40 L513.86 330.03 L518.37 330.64 L522.91 331.21 L527.49 331.74 L532.10 332.24 L536.74 332.71 L541.42 333.13 L546.12 333.52 L550.84 333.88 L555.59 334.20 L560.36 334.48 L565.15 334.72 L569.95 334.93 L574.77 335.10 L579.60 335.23 L584.44 335.33 L589.29 335.38 L594.13 335.40 L598.99 335.38 L603.84 335.33 L608.69 335.23 L613.53 335.10 L618.37 334.93 L623.20 334.72 L628.02 334.48 L632.82 334.20 L637.60 333.88 L642.37 333.52 L647.12 333.13 L651.84 332.71 L656.54 332.24 L661.21 331.74 L665.85 331.21 L670.46 330.64 L675.04 330.03 L679.57 329.40 L684.08 328.72 L688.54 328.02 L692.96 327.28 L697.33 326.51 L701.66 325.70 L705.95 324.87 L710.18 324.00 L714.36 323.11 L718.49 322.18 L722.56 321.22 L726.58 320.24 L730.54 319.23 L734.45 318.19 L738.29 317.12 L742.07 316.02 L745.78 314.90 L749.43 313.76 L753.02 312.59 L756.53 311.40 L759.98 310.18 L763.36 308.94 L766.67 307.68 L769.91 306.40 L773.08 305.10 L776.17 303.77 L779.19 302.43 L782.13 301.07 L784.99 299.69 L787.78 298.30 L790.50 296.89 L793.13 295.46 L795.69 294.02 L798.17 292.57 L800.57 291.10 L802.89 289.62 L805.13 288.12 L807.29 286.62 L809.37 285.10 L811.37 283.58 L813.29 282.04 L815.12 280.50 L816.88 278.94 L818.55 277.38 L820.15 275.82 L821.66 274.25 L823.09 272.67 L824.45 271.09 L825.72 269.50 L826.91 267.91 L828.02 266.32 L829.05 264.72 L830.00 263.13 L830.87 261.53 L831.66 259.93 L832.38 258.33 L833.02 256.73 L833.57 255.13 L834.06 253.54 L834.46 251.95 L834.79 250.36 L835.04 248.77 L835.22 247.19 L835.32 245.61 L835.35 244.03 L835.31 242.46 L835.19 240.90 L835.00 239.34 L834.75 237.79 L834.42 236.25 L834.02 234.71 L833.55 233.18 L833.01 231.66 L832.40 230.15 L831.73 228.64 L830.99 227.15 L830.19 225.67 L829.32 224.19 L828.39 222.73 L827.39 221.28 L826.34 219.84 L825.22 218.41 L824.04 216.99 L822.80 215.58 L821.50 214.19 L820.15 212.80 L818.73 211.44 L817.26 210.08 L815.74 208.74 L814.16 207.41 L812.53 206.09 L810.84 204.79 L809.10 203.51 L807.31 202.24 L805.47 200.98 L803.58 199.74 L801.64 198.51 L799.65 197.30 L797.62 196.10 L795.54 194.92 L793.41 193.76 L791.24 192.61 L789.02 191.48 L786.76 190.37 L784.46 189.27 L782.12 188.19 L779.74 187.12 L777.32 186.07 L774.86 185.04 L772.36 184.03 L769.82 183.03 L767.25 182.05 L764.64 181.09 L761.99 180.15 L759.32 179.22 L756.60 178.32 L753.86 177.43 L751.08 176.55 L748.28 175.70 L745.44 174.87 L742.57 174.05 L739.67 173.25 L736.75 172.47 L733.80 171.71 L730.82 170.96 L727.81 170.24 L724.78 169.53 L721.73 168.85 L718.65 168.18 L715.55 167.53 L712.42 166.90 L709.28 166.29 L706.11 165.70 L702.92 165.12 L699.71 164.57 L696.49 164.03 L693.24 163.52 L689.98 163.02 L686.70 162.55 L683.41 162.09 L680.09 161.65 L676.77 161.23 L673.43 160.83 L670.07 160.45 L666.71 160.09 L663.33 159.75 L659.93 159.42 L656.53 159.12 L653.12 158.84 L649.69 158.57 L646.26 158.33 L642.82 158.10 L639.37 157.90 L635.92 157.71 L632.45 157.55 L628.98 157.40 L625.51 157.27 L622.03 157.16 L618.55 157.08 L615.06 157.01 L611.57 156.96 L608.07 156.93 L604.58 156.92 Z" fill="url(#rimg)"/>
<path d="M604.44 153.43 L601.00 153.44 L597.56 153.47 L594.13 153.52 L590.69 153.58 L587.26 153.67 L583.82 153.77 L580.39 153.90 L576.96 154.04 L573.54 154.20 L570.12 154.38 L566.71 154.58 L563.30 154.80 L559.90 155.04 L556.50 155.30 L553.11 155.58 L549.73 155.87 L546.36 156.19 L543.00 156.52 L539.65 156.87 L536.31 157.24 L532.98 157.63 L529.67 158.04 L526.36 158.47 L523.07 158.92 L519.79 159.38 L516.53 159.87 L513.28 160.37 L510.05 160.89 L506.84 161.43 L503.64 161.99 L500.46 162.57 L497.30 163.16 L494.16 163.78 L491.04 164.41 L487.94 165.06 L484.86 165.73 L481.81 166.42 L478.78 167.13 L475.77 167.85 L472.78 168.59 L469.82 169.35 L466.89 170.13 L463.98 170.93 L461.10 171.74 L458.25 172.57 L455.42 173.42 L452.63 174.29 L449.87 175.17 L447.13 176.08 L444.43 176.99 L441.77 177.93 L439.13 178.88 L436.53 179.85 L433.97 180.84 L431.44 181.84 L428.94 182.86 L426.49 183.90 L424.07 184.95 L421.69 186.02 L419.36 187.11 L417.06 188.21 L414.80 189.33 L412.59 190.46 L410.42 191.61 L408.29 192.77 L406.21 193.95 L404.17 195.14 L402.18 196.35 L400.24 197.57 L398.35 198.81 L396.50 200.06 L394.71 201.32 L392.96 202.60 L391.27 203.89 L389.63 205.20 L388.04 206.51 L386.51 207.84 L385.03 209.19 L383.61 210.54 L382.24 211.91 L380.93 213.28 L379.68 214.67 L378.49 216.07 L377.36 217.48 L376.29 218.91 L375.28 220.34 L374.34 221.78 L373.45 223.23 L372.63 224.69 L371.88 226.15 L371.19 227.63 L370.57 229.11 L370.01 230.60 L369.52 232.10 L369.11 233.60 L368.75 235.11 L368.47 236.63 L368.26 238.15 L368.13 239.68 L368.06 241.21 L368.07 242.74 L368.15 244.28 L368.30 245.82 L368.53 247.37 L368.83 248.91 L369.20 250.46 L369.66 252.01 L370.19 253.55 L370.79 255.10 L371.48 256.65 L372.24 258.20 L373.08 259.74 L374.00 261.28 L374.99 262.82 L376.07 264.35 L377.22 265.89 L378.46 267.41 L379.77 268.93 L381.16 270.45 L382.64 271.95 L384.19 273.46 L385.82 274.95 L387.54 276.43 L389.33 277.91 L391.20 279.37 L393.15 280.83 L395.19 282.27 L397.30 283.70 L399.49 285.12 L401.76 286.53 L404.10 287.92 L406.53 289.30 L409.03 290.66 L411.61 292.00 L414.26 293.33 L416.99 294.65 L419.80 295.94 L422.68 297.22 L425.63 298.48 L428.66 299.71 L431.76 300.93 L434.93 302.12 L438.17 303.30 L441.48 304.45 L444.86 305.58 L448.30 306.68 L451.81 307.76 L455.38 308.82 L459.02 309.85 L462.72 310.85 L466.48 311.83 L470.30 312.78 L474.18 313.70 L478.11 314.59 L482.10 315.45 L486.14 316.29 L490.23 317.09 L494.37 317.87 L498.56 318.61 L502.80 319.32 L507.08 320.00 L511.40 320.65 L515.76 321.27 L520.17 321.85 L524.61 322.40 L529.08 322.91 L533.59 323.39 L538.12 323.84 L542.69 324.25 L547.28 324.63 L551.90 324.97 L556.54 325.28 L561.20 325.55 L565.87 325.78 L570.56 325.98 L575.27 326.14 L579.99 326.27 L584.71 326.36 L589.45 326.42 L594.18 326.44 L598.92 326.42 L603.66 326.36 L608.40 326.27 L613.13 326.14 L617.86 325.98 L622.57 325.78 L627.28 325.55 L631.97 325.28 L636.64 324.97 L641.30 324.63 L645.94 324.25 L650.55 323.84 L655.14 323.39 L659.71 322.91 L664.24 322.40 L668.74 321.85 L673.22 321.27 L677.65 320.65 L682.05 320.00 L686.41 319.32 L690.73 318.61 L695.01 317.87 L699.25 317.09 L703.43 316.29 L707.57 315.45 L711.66 314.59 L715.70 313.70 L719.69 312.78 L723.62 311.83 L727.50 310.85 L731.31 309.85 L735.07 308.82 L738.77 307.76 L742.41 306.68 L745.98 305.58 L749.50 304.45 L752.94 303.30 L756.32 302.12 L759.63 300.93 L762.87 299.71 L766.05 298.48 L769.15 297.22 L772.18 295.94 L775.14 294.65 L778.03 293.33 L780.84 292.00 L783.58 290.66 L786.24 289.30 L788.83 287.92 L791.34 286.53 L793.78 285.12 L796.14 283.70 L798.42 282.27 L800.62 280.83 L802.74 279.37 L804.79 277.91 L806.76 276.43 L808.65 274.95 L810.46 273.46 L812.19 271.95 L813.84 270.45 L815.41 268.93 L816.91 267.41 L818.32 265.89 L819.66 264.35 L820.92 262.82 L822.09 261.28 L823.20 259.74 L824.22 258.20 L825.16 256.65 L826.03 255.10 L826.82 253.55 L827.53 252.01 L828.17 250.46 L828.73 248.91 L829.22 247.37 L829.63 245.82 L829.96 244.28 L830.22 242.74 L830.41 241.21 L830.53 239.68 L830.57 238.15 L830.54 236.63 L830.44 235.11 L830.27 233.60 L830.03 232.10 L829.72 230.60 L829.34 229.11 L828.89 227.63 L828.38 226.15 L827.80 224.69 L827.15 223.23 L826.44 221.78 L825.66 220.34 L824.82 218.91 L823.92 217.48 L822.96 216.07 L821.93 214.67 L820.85 213.28 L819.70 211.91 L818.50 210.54 L817.24 209.19 L815.92 207.84 L814.54 206.51 L813.11 205.20 L811.63 203.89 L810.09 202.60 L808.49 201.32 L806.85 200.06 L805.15 198.81 L803.40 197.57 L801.61 196.35 L799.76 195.14 L797.86 193.95 L795.92 192.77 L793.93 191.61 L791.90 190.46 L789.82 189.33 L787.70 188.21 L785.53 187.11 L783.32 186.02 L781.07 184.95 L778.78 183.90 L776.44 182.86 L774.07 181.84 L771.66 180.84 L769.21 179.85 L766.73 178.88 L764.21 177.93 L761.65 176.99 L759.06 176.08 L756.43 175.17 L753.77 174.29 L751.08 173.42 L748.36 172.57 L745.61 171.74 L742.82 170.93 L740.01 170.13 L737.17 169.35 L734.30 168.59 L731.40 167.85 L728.48 167.13 L725.53 166.42 L722.55 165.73 L719.56 165.06 L716.53 164.41 L713.49 163.78 L710.42 163.16 L707.33 162.57 L704.22 161.99 L701.09 161.43 L697.94 160.89 L694.77 160.37 L691.58 159.87 L688.38 159.38 L685.16 158.92 L681.92 158.47 L678.67 158.04 L675.40 157.63 L672.11 157.24 L668.82 156.87 L665.51 156.52 L662.19 156.19 L658.85 155.87 L655.51 155.58 L652.15 155.30 L648.79 155.04 L645.42 154.80 L642.03 154.58 L638.64 154.38 L635.24 154.20 L631.84 154.04 L628.43 153.90 L625.01 153.77 L621.59 153.67 L618.17 153.58 L614.74 153.52 L611.31 153.47 L607.87 153.44 L604.44 153.43 Z" fill="#4a4a4a" filter="url(#fblur)"/>
</g>
</svg>
</div>
<div style="position:absolute;left:364px;top:96px;width:1263px;height:1px;background:#222;"></div>
<div style="position:absolute;left:364px;top:96px;width:1px;height:889px;background:#222;"></div>
<div style="position:absolute;left:1626px;top:96px;width:1px;height:889px;background:#222;"></div>
<div style="position:absolute;left:364px;top:984px;width:1263px;height:1px;background:#222;"></div>
<div style="position:absolute;left:363px;top:985px;width:1265px;height:1px;background:#fcfcfc;"></div>
<svg style="position:absolute;left:1632px;top:535px;" width="6" height="10" viewBox="0 0 6 10"><path d="M0.5 0.5 V9.5 L5.2 5 Z" fill="#555"/></svg>
<svg style="position:absolute;left:1645px;top:535px;" width="3" height="17" viewBox="0 0 3 17"><circle cx="1.5" cy="0.8" r="0.6" fill="#aaa"/><circle cx="1.5" cy="3.8" r="0.6" fill="#aaa"/><circle cx="1.5" cy="6.8" r="0.6" fill="#aaa"/><circle cx="1.5" cy="9.8" r="0.6" fill="#aaa"/><circle cx="1.5" cy="12.8" r="0.6" fill="#aaa"/><circle cx="1.5" cy="15.8" r="0.6" fill="#aaa"/></svg>
<div style="position:absolute;left:1627px;top:95px;width:1px;height:891px;background:#fcfcfc;"></div>
<div style="position:absolute;left:1649px;top:96px;width:271px;height:22px;background:#b8b8b8;"></div>
<svg style="position:absolute;left:1652px;top:101px;" width="18" height="12" viewBox="0 0 18 12"><path d="M1 1.2 L5.5 5.5 V6.5 L1 10.8 Z" fill="#404040"/><rect x="5" y="1.8" width="12" height="8" rx="3" fill="#404040"/></svg>
<div class="t" style="left:1675.3px;top:101.00px;font-size:13px;color:#000;font-weight:normal;letter-spacing:0.15px;">Views</div>
<div class="close" style="left:1901px;top:98px;"></div>
<svg style="position:absolute;left:1903px;top:100px;" width="13" height="13" viewBox="0 0 13 13"><path d="M4.2 1 H8.8 L12 4.2 V8.8 L8.8 12 H4.2 L1 8.8 V4.2 Z" fill="#d01818"/>
<path d="M4.3 4.3 L8.7 8.7 M8.7 4.3 L4.3 8.7" stroke="#fff" stroke-width="1.5"/></svg>
<div class="t" style="left:1651.5px;top:129.30px;font-size:13px;color:#000;font-weight:normal;letter-spacing:0.15px;">Type:</div>
<div class="btn" style="left:1689px;top:124.5px;width:143px;height:22px;"></div>
<div style="position:absolute;left:1694px;top:126px;width:116px;height:19px;overflow:hidden;">
<div class="t" style="left:0px;top:2.30px;font-size:13px;color:#000;font-weight:normal;letter-spacing:0.15px;">Orbit (rviz_default_plugins)</div>
</div>
<svg style="position:absolute;left:1816px;top:133px;" width="9" height="5" viewBox="0 0 9 5"><path d="M0.5 0.5 H8 L4.25 4.5 Z" fill="#444"/></svg>
<div class="btn" style="left:1838.5px;top:124.5px;width:79px;height:22px;"></div>
<div class="t" style="left:1838.5px;width:79px;text-align:center;top:128.30px;font-size:13px;color:#000;font-weight:normal;letter-spacing:0.15px">Zero</div>
<div style="position:absolute;left:1649px;top:155px;width:271px;height:799px;box-sizing:border-box;background:#fff;border:1px solid #b3b3b3;"></div>
<div style="position:absolute;left:1784px;top:156px;width:1px;height:797px;background:#e6e6e6;"></div>
<svg style="position:absolute;left:1655.5px;top:161px;" width="9" height="5" viewBox="0 0 9 5"><path d="M0.5 0.5 H8 L4.25 4.5 Z" fill="#555"/></svg>
<div class="t" style="left:1673.4px;top:156.80px;font-size:13px;color:#000;font-weight:bold;letter-spacing:0.5px;">Current View</div>
<div class="t" style="left:1787.2px;top:156.80px;font-size:13px;color:#000;font-weight:bold;letter-spacing:0.4px;">Orbit (rviz)</div>
<div class="t" style="left:1693px;top:171.80px;font-size:13px;color:#000;font-weight:normal;letter-spacing:0.15px;">Near Clip Di...</div>
<div class="t" style="left:1787.2px;top:171.80px;font-size:13px;color:#000;font-weight:normal;letter-spacing:0.15px;">0.01</div>
<div class="t" style="left:1693px;top:186.80px;font-size:13px;color:#000;font-weight:normal;letter-spacing:0.15px;">Invert Z Axis</div>
<div class="t" style="left:1693px;top:201.80px;font-size:13px;color:#000;font-weight:normal;letter-spacing:0.15px;">Target Frame</div>
<div class="t" style="left:1787.2px;top:201.80px;font-size:13px;color:#000;font-weight:normal;letter-spacing:0.15px;">&lt;Fixed Frame&gt;</div>
<div class="t" style="left:1693px;top:216.80px;font-size:13px;color:#000;font-weight:normal;letter-spacing:0.15px;">Distance</div>
<div class="t" style="left:1787.2px;top:216.80px;font-size:13px;color:#000;font-weight:normal;letter-spacing:0.15px;">0.622566</div>
<div class="t" style="left:1693px;top:231.80px;font-size:13px;color:#000;font-weight:normal;letter-spacing:0.15px;">Focal Shape...</div>
<div class="t" style="left:1787.2px;top:231.80px;font-size:13px;color:#000;font-weight:normal;letter-spacing:0.15px;">0.05</div>
<div class="t" style="left:1693px;top:246.80px;font-size:13px;color:#000;font-weight:normal;letter-spacing:0.15px;">Focal Shape...</div>
<div class="t" style="left:1693px;top:261.80px;font-size:13px;color:#000;font-weight:normal;letter-spacing:0.15px;">Yaw</div>
<div class="t" style="left:1787.2px;top:261.80px;font-size:13px;color:#000;font-weight:normal;letter-spacing:0.15px;">0.815398</div>
<div class="t" style="left:1693px;top:276.80px;font-size:13px;color:#000;font-weight:normal;letter-spacing:0.15px;">Pitch</div>
<div class="t" style="left:1787.2px;top:276.80px;font-size:13px;color:#000;font-weight:normal;letter-spacing:0.15px;">0.560398</div>
<div class="t" style="left:1693px;top:291.80px;font-size:13px;color:#000;font-weight:normal;letter-spacing:0.15px;">Focal Point</div>
<div class="t" style="left:1787.2px;top:291.80px;font-size:13px;color:#000;font-weight:normal;letter-spacing:0.15px;">-0.21391; -0.21697...</div>
<div class="cb" style="left:1787px;top:186.5px;width:14px;height:13px;"></div>
<div class="cb" style="left:1787px;top:246.5px;width:14px;height:13px;"></div>
<svg style="position:absolute;left:1788px;top:247px;" width="12" height="12" viewBox="0 0 12 12"><path d="M2.5 5.5 L5 9.5 L9.5 2" fill="none" stroke="#111" stroke-width="1.6"/></svg>
<svg style="position:absolute;left:1678px;top:294px;" width="6" height="9" viewBox="0 0 6 9"><path d="M0.5 0.5 V8.5 L5 4.5 Z" fill="#555"/></svg>
<div class="btn" style="left:1651px;top:959.5px;width:85px;height:23px;"></div>
<div class="t" style="left:1651.0px;width:85px;text-align:center;top:964.50px;font-size:13px;color:#000;font-weight:normal;letter-spacing:0.15px">Save</div>
<div class="btn" style="left:1742px;top:959.5px;width:85px;height:23px;"></div>
<div class="t" style="left:1742.0px;width:85px;text-align:center;top:964.50px;font-size:13px;color:#000;font-weight:normal;letter-spacing:0.15px">Remove</div>
<div class="btn" style="left:1833px;top:959.5px;width:85px;height:23px;"></div>
<div class="t" style="left:1833.0px;width:85px;text-align:center;top:964.50px;font-size:13px;color:#000;font-weight:normal;letter-spacing:0.15px">Rename</div>
<div style="position:absolute;left:0px;top:991px;width:1920px;height:22px;background:#b8b8b8;"></div>
<svg style="position:absolute;left:3px;top:995px;" width="17" height="16" viewBox="0 0 17 16"><circle cx="8" cy="8" r="6.6" fill="#fff" stroke="#222" stroke-width="1.6"/><path d="M7.5 3.5 V8.5 H11.5" fill="none" stroke="#222" stroke-width="1.4"/></svg>
<div class="t" style="left:26.6px;top:995.00px;font-size:13px;color:#000;font-weight:normal;letter-spacing:0.15px;">Time</div>
<div class="close" style="left:1901px;top:994px;height:16px;"></div>
<svg style="position:absolute;left:1903px;top:995.5px;" width="13" height="13" viewBox="0 0 13 13"><path d="M4.2 1 H8.8 L12 4.2 V8.8 L8.8 12 H4.2 L1 8.8 V4.2 Z" fill="#d01818"/>
<path d="M4.3 4.3 L8.7 8.7 M8.7 4.3 L4.3 8.7" stroke="#fff" stroke-width="1.5"/></svg>
<div class="t" style="left:11px;top:1026.80px;font-size:13px;color:#000;font-weight:normal;letter-spacing:0.15px;">ROS Time:</div>
<div class="inp" style="left:80.3px;top:1021.3px;width:124px;height:22.5px;"></div>
<div class="t" style="left:83.5px;top:1025.80px;font-size:13px;color:#000;font-weight:normal;letter-spacing:0.15px;">33.64</div>
<div class="t" style="left:211px;top:1026.80px;font-size:13px;color:#000;font-weight:normal;letter-spacing:0.15px;">ROS Elapsed:</div>
<div class="inp" style="left:298.2px;top:1021.3px;width:124px;height:22.5px;"></div>
<div class="t" style="left:301.4px;top:1025.80px;font-size:13px;color:#000;font-weight:normal;letter-spacing:0.15px;">33.64</div>
<div class="t" style="left:429.1px;top:1026.80px;font-size:13px;color:#000;font-weight:normal;letter-spacing:0.15px;">Wall Time:</div>
<div class="inp" style="left:498.5px;top:1021.3px;width:124px;height:22.5px;"></div>
<div class="t" style="left:501.7px;top:1025.80px;font-size:13px;color:#000;font-weight:normal;letter-spacing:0.15px;">1759413369.37</div>
<div class="t" style="left:629.3px;top:1026.80px;font-size:13px;color:#000;font-weight:normal;letter-spacing:0.15px;">Wall Elapsed:</div>
<div class="inp" style="left:716.5px;top:1021.3px;width:124px;height:22.5px;"></div>
<div class="t" style="left:719.7px;top:1025.80px;font-size:13px;color:#000;font-weight:normal;letter-spacing:0.15px;">36.35</div>
<div class="cb" style="left:1804px;top:1026px;width:14px;height:14px;"></div>
<div class="t" style="left:1823.3px;top:1026.70px;font-size:13px;color:#000;font-weight:normal;letter-spacing:0.15px;">Experimental</div>
<div class="btn" style="left:2.5px;top:1056.5px;width:49px;height:21px;"></div>
<div class="t" style="left:2.5px;width:49px;text-align:center;top:1060.00px;font-size:13px;color:#000;font-weight:normal;letter-spacing:0.15px">Reset</div>
<div class="t" style="left:1859.2px;top:1056.70px;font-size:13px;color:#000;font-weight:normal;letter-spacing:0.15px;">31 fps</div>
<svg style="position:absolute;left:1906px;top:1068px;" width="13" height="11" viewBox="0 0 13 11"><circle cx="11" cy="1.5" r="0.55" fill="#aaa"/><circle cx="8" cy="4.5" r="0.55" fill="#aaa"/><circle cx="11" cy="4.5" r="0.55" fill="#aaa"/><circle cx="5" cy="7.5" r="0.55" fill="#aaa"/><circle cx="8" cy="7.5" r="0.55" fill="#aaa"/><circle cx="11" cy="7.5" r="0.55" fill="#aaa"/><circle cx="2" cy="10.5" r="0.55" fill="#aaa"/><circle cx="5" cy="10.5" r="0.55" fill="#aaa"/><circle cx="8" cy="10.5" r="0.55" fill="#aaa"/><circle cx="11" cy="10.5" r="0.55" fill="#aaa"/></svg>
</body></html>
